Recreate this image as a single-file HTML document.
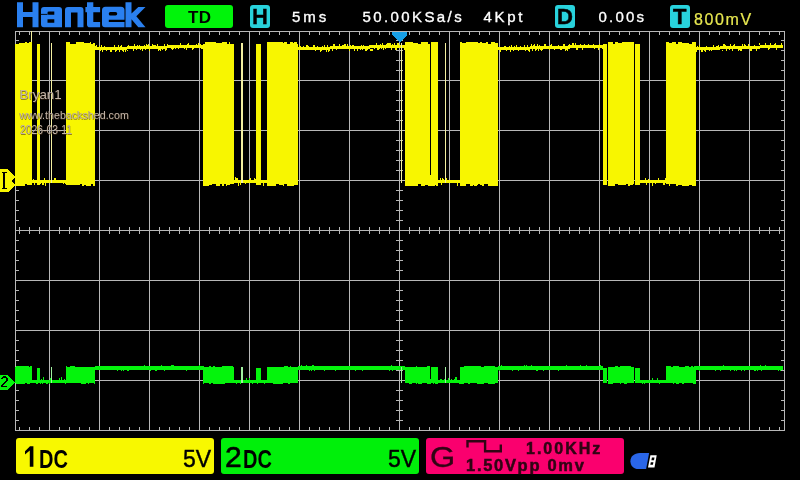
<!DOCTYPE html>
<html><head><meta charset="utf-8">
<style>
html,body{margin:0;padding:0;background:#000;}
#scr{will-change:transform;position:relative;width:800px;height:480px;overflow:hidden;background:#000;font-family:"Liberation Sans",sans-serif;}
.t{position:absolute;white-space:nowrap;line-height:1;}
svg{position:absolute;left:0;top:0;}
.box{position:absolute;border-radius:3px;}
.ov{color:#c4b6aa;text-shadow:0.6px 0.6px 0 rgba(70,45,20,.55),-0.4px -0.4px 0 rgba(70,45,20,.35);}
.tw{font-size:15px;color:#fff;-webkit-text-stroke:0.35px #fff;}
</style></head><body><div id="scr">
<svg width="800" height="480" viewBox="0 0 800 480" shape-rendering="crispEdges">
<rect x="15" y="31" width="770" height="1" fill="#b8b8b8"/>
<rect x="15" y="430" width="770" height="1" fill="#b8b8b8"/>
<rect x="15" y="31" width="1" height="400" fill="#b8b8b8"/>
<rect x="784" y="31" width="1" height="400" fill="#b8b8b8"/>
<rect x="49" y="31" width="1" height="399" fill="#b8b8b8"/>
<rect x="99" y="31" width="1" height="399" fill="#b8b8b8"/>
<rect x="149" y="31" width="1" height="399" fill="#b8b8b8"/>
<rect x="199" y="31" width="1" height="399" fill="#b8b8b8"/>
<rect x="249" y="31" width="1" height="399" fill="#b8b8b8"/>
<rect x="299" y="31" width="1" height="399" fill="#b8b8b8"/>
<rect x="349" y="31" width="1" height="399" fill="#b8b8b8"/>
<rect x="399" y="31" width="1" height="399" fill="#b8b8b8"/>
<rect x="449" y="31" width="1" height="399" fill="#b8b8b8"/>
<rect x="499" y="31" width="1" height="399" fill="#b8b8b8"/>
<rect x="549" y="31" width="1" height="399" fill="#b8b8b8"/>
<rect x="599" y="31" width="1" height="399" fill="#b8b8b8"/>
<rect x="649" y="31" width="1" height="399" fill="#b8b8b8"/>
<rect x="699" y="31" width="1" height="399" fill="#b8b8b8"/>
<rect x="749" y="31" width="1" height="399" fill="#b8b8b8"/>
<rect x="15" y="80" width="769" height="1" fill="#b8b8b8"/>
<rect x="15" y="130" width="769" height="1" fill="#b8b8b8"/>
<rect x="15" y="180" width="769" height="1" fill="#b8b8b8"/>
<rect x="15" y="230" width="769" height="1" fill="#b8b8b8"/>
<rect x="15" y="280" width="769" height="1" fill="#b8b8b8"/>
<rect x="15" y="330" width="769" height="1" fill="#b8b8b8"/>
<rect x="15" y="380" width="769" height="1" fill="#b8b8b8"/>
<rect x="19" y="32" width="1" height="3" fill="#b8b8b8"/>
<rect x="19" y="427" width="1" height="3" fill="#b8b8b8"/>
<rect x="19" y="227" width="1" height="7" fill="#b8b8b8"/>
<rect x="29" y="32" width="1" height="3" fill="#b8b8b8"/>
<rect x="29" y="427" width="1" height="3" fill="#b8b8b8"/>
<rect x="29" y="227" width="1" height="7" fill="#b8b8b8"/>
<rect x="39" y="32" width="1" height="3" fill="#b8b8b8"/>
<rect x="39" y="427" width="1" height="3" fill="#b8b8b8"/>
<rect x="39" y="227" width="1" height="7" fill="#b8b8b8"/>
<rect x="59" y="32" width="1" height="3" fill="#b8b8b8"/>
<rect x="59" y="427" width="1" height="3" fill="#b8b8b8"/>
<rect x="59" y="227" width="1" height="7" fill="#b8b8b8"/>
<rect x="69" y="32" width="1" height="3" fill="#b8b8b8"/>
<rect x="69" y="427" width="1" height="3" fill="#b8b8b8"/>
<rect x="69" y="227" width="1" height="7" fill="#b8b8b8"/>
<rect x="79" y="32" width="1" height="3" fill="#b8b8b8"/>
<rect x="79" y="427" width="1" height="3" fill="#b8b8b8"/>
<rect x="79" y="227" width="1" height="7" fill="#b8b8b8"/>
<rect x="89" y="32" width="1" height="3" fill="#b8b8b8"/>
<rect x="89" y="427" width="1" height="3" fill="#b8b8b8"/>
<rect x="89" y="227" width="1" height="7" fill="#b8b8b8"/>
<rect x="109" y="32" width="1" height="3" fill="#b8b8b8"/>
<rect x="109" y="427" width="1" height="3" fill="#b8b8b8"/>
<rect x="109" y="227" width="1" height="7" fill="#b8b8b8"/>
<rect x="119" y="32" width="1" height="3" fill="#b8b8b8"/>
<rect x="119" y="427" width="1" height="3" fill="#b8b8b8"/>
<rect x="119" y="227" width="1" height="7" fill="#b8b8b8"/>
<rect x="129" y="32" width="1" height="3" fill="#b8b8b8"/>
<rect x="129" y="427" width="1" height="3" fill="#b8b8b8"/>
<rect x="129" y="227" width="1" height="7" fill="#b8b8b8"/>
<rect x="139" y="32" width="1" height="3" fill="#b8b8b8"/>
<rect x="139" y="427" width="1" height="3" fill="#b8b8b8"/>
<rect x="139" y="227" width="1" height="7" fill="#b8b8b8"/>
<rect x="159" y="32" width="1" height="3" fill="#b8b8b8"/>
<rect x="159" y="427" width="1" height="3" fill="#b8b8b8"/>
<rect x="159" y="227" width="1" height="7" fill="#b8b8b8"/>
<rect x="169" y="32" width="1" height="3" fill="#b8b8b8"/>
<rect x="169" y="427" width="1" height="3" fill="#b8b8b8"/>
<rect x="169" y="227" width="1" height="7" fill="#b8b8b8"/>
<rect x="179" y="32" width="1" height="3" fill="#b8b8b8"/>
<rect x="179" y="427" width="1" height="3" fill="#b8b8b8"/>
<rect x="179" y="227" width="1" height="7" fill="#b8b8b8"/>
<rect x="189" y="32" width="1" height="3" fill="#b8b8b8"/>
<rect x="189" y="427" width="1" height="3" fill="#b8b8b8"/>
<rect x="189" y="227" width="1" height="7" fill="#b8b8b8"/>
<rect x="209" y="32" width="1" height="3" fill="#b8b8b8"/>
<rect x="209" y="427" width="1" height="3" fill="#b8b8b8"/>
<rect x="209" y="227" width="1" height="7" fill="#b8b8b8"/>
<rect x="219" y="32" width="1" height="3" fill="#b8b8b8"/>
<rect x="219" y="427" width="1" height="3" fill="#b8b8b8"/>
<rect x="219" y="227" width="1" height="7" fill="#b8b8b8"/>
<rect x="229" y="32" width="1" height="3" fill="#b8b8b8"/>
<rect x="229" y="427" width="1" height="3" fill="#b8b8b8"/>
<rect x="229" y="227" width="1" height="7" fill="#b8b8b8"/>
<rect x="239" y="32" width="1" height="3" fill="#b8b8b8"/>
<rect x="239" y="427" width="1" height="3" fill="#b8b8b8"/>
<rect x="239" y="227" width="1" height="7" fill="#b8b8b8"/>
<rect x="259" y="32" width="1" height="3" fill="#b8b8b8"/>
<rect x="259" y="427" width="1" height="3" fill="#b8b8b8"/>
<rect x="259" y="227" width="1" height="7" fill="#b8b8b8"/>
<rect x="269" y="32" width="1" height="3" fill="#b8b8b8"/>
<rect x="269" y="427" width="1" height="3" fill="#b8b8b8"/>
<rect x="269" y="227" width="1" height="7" fill="#b8b8b8"/>
<rect x="279" y="32" width="1" height="3" fill="#b8b8b8"/>
<rect x="279" y="427" width="1" height="3" fill="#b8b8b8"/>
<rect x="279" y="227" width="1" height="7" fill="#b8b8b8"/>
<rect x="289" y="32" width="1" height="3" fill="#b8b8b8"/>
<rect x="289" y="427" width="1" height="3" fill="#b8b8b8"/>
<rect x="289" y="227" width="1" height="7" fill="#b8b8b8"/>
<rect x="309" y="32" width="1" height="3" fill="#b8b8b8"/>
<rect x="309" y="427" width="1" height="3" fill="#b8b8b8"/>
<rect x="309" y="227" width="1" height="7" fill="#b8b8b8"/>
<rect x="319" y="32" width="1" height="3" fill="#b8b8b8"/>
<rect x="319" y="427" width="1" height="3" fill="#b8b8b8"/>
<rect x="319" y="227" width="1" height="7" fill="#b8b8b8"/>
<rect x="329" y="32" width="1" height="3" fill="#b8b8b8"/>
<rect x="329" y="427" width="1" height="3" fill="#b8b8b8"/>
<rect x="329" y="227" width="1" height="7" fill="#b8b8b8"/>
<rect x="339" y="32" width="1" height="3" fill="#b8b8b8"/>
<rect x="339" y="427" width="1" height="3" fill="#b8b8b8"/>
<rect x="339" y="227" width="1" height="7" fill="#b8b8b8"/>
<rect x="359" y="32" width="1" height="3" fill="#b8b8b8"/>
<rect x="359" y="427" width="1" height="3" fill="#b8b8b8"/>
<rect x="359" y="227" width="1" height="7" fill="#b8b8b8"/>
<rect x="369" y="32" width="1" height="3" fill="#b8b8b8"/>
<rect x="369" y="427" width="1" height="3" fill="#b8b8b8"/>
<rect x="369" y="227" width="1" height="7" fill="#b8b8b8"/>
<rect x="379" y="32" width="1" height="3" fill="#b8b8b8"/>
<rect x="379" y="427" width="1" height="3" fill="#b8b8b8"/>
<rect x="379" y="227" width="1" height="7" fill="#b8b8b8"/>
<rect x="389" y="32" width="1" height="3" fill="#b8b8b8"/>
<rect x="389" y="427" width="1" height="3" fill="#b8b8b8"/>
<rect x="389" y="227" width="1" height="7" fill="#b8b8b8"/>
<rect x="409" y="32" width="1" height="3" fill="#b8b8b8"/>
<rect x="409" y="427" width="1" height="3" fill="#b8b8b8"/>
<rect x="409" y="227" width="1" height="7" fill="#b8b8b8"/>
<rect x="419" y="32" width="1" height="3" fill="#b8b8b8"/>
<rect x="419" y="427" width="1" height="3" fill="#b8b8b8"/>
<rect x="419" y="227" width="1" height="7" fill="#b8b8b8"/>
<rect x="429" y="32" width="1" height="3" fill="#b8b8b8"/>
<rect x="429" y="427" width="1" height="3" fill="#b8b8b8"/>
<rect x="429" y="227" width="1" height="7" fill="#b8b8b8"/>
<rect x="439" y="32" width="1" height="3" fill="#b8b8b8"/>
<rect x="439" y="427" width="1" height="3" fill="#b8b8b8"/>
<rect x="439" y="227" width="1" height="7" fill="#b8b8b8"/>
<rect x="459" y="32" width="1" height="3" fill="#b8b8b8"/>
<rect x="459" y="427" width="1" height="3" fill="#b8b8b8"/>
<rect x="459" y="227" width="1" height="7" fill="#b8b8b8"/>
<rect x="469" y="32" width="1" height="3" fill="#b8b8b8"/>
<rect x="469" y="427" width="1" height="3" fill="#b8b8b8"/>
<rect x="469" y="227" width="1" height="7" fill="#b8b8b8"/>
<rect x="479" y="32" width="1" height="3" fill="#b8b8b8"/>
<rect x="479" y="427" width="1" height="3" fill="#b8b8b8"/>
<rect x="479" y="227" width="1" height="7" fill="#b8b8b8"/>
<rect x="489" y="32" width="1" height="3" fill="#b8b8b8"/>
<rect x="489" y="427" width="1" height="3" fill="#b8b8b8"/>
<rect x="489" y="227" width="1" height="7" fill="#b8b8b8"/>
<rect x="509" y="32" width="1" height="3" fill="#b8b8b8"/>
<rect x="509" y="427" width="1" height="3" fill="#b8b8b8"/>
<rect x="509" y="227" width="1" height="7" fill="#b8b8b8"/>
<rect x="519" y="32" width="1" height="3" fill="#b8b8b8"/>
<rect x="519" y="427" width="1" height="3" fill="#b8b8b8"/>
<rect x="519" y="227" width="1" height="7" fill="#b8b8b8"/>
<rect x="529" y="32" width="1" height="3" fill="#b8b8b8"/>
<rect x="529" y="427" width="1" height="3" fill="#b8b8b8"/>
<rect x="529" y="227" width="1" height="7" fill="#b8b8b8"/>
<rect x="539" y="32" width="1" height="3" fill="#b8b8b8"/>
<rect x="539" y="427" width="1" height="3" fill="#b8b8b8"/>
<rect x="539" y="227" width="1" height="7" fill="#b8b8b8"/>
<rect x="559" y="32" width="1" height="3" fill="#b8b8b8"/>
<rect x="559" y="427" width="1" height="3" fill="#b8b8b8"/>
<rect x="559" y="227" width="1" height="7" fill="#b8b8b8"/>
<rect x="569" y="32" width="1" height="3" fill="#b8b8b8"/>
<rect x="569" y="427" width="1" height="3" fill="#b8b8b8"/>
<rect x="569" y="227" width="1" height="7" fill="#b8b8b8"/>
<rect x="579" y="32" width="1" height="3" fill="#b8b8b8"/>
<rect x="579" y="427" width="1" height="3" fill="#b8b8b8"/>
<rect x="579" y="227" width="1" height="7" fill="#b8b8b8"/>
<rect x="589" y="32" width="1" height="3" fill="#b8b8b8"/>
<rect x="589" y="427" width="1" height="3" fill="#b8b8b8"/>
<rect x="589" y="227" width="1" height="7" fill="#b8b8b8"/>
<rect x="609" y="32" width="1" height="3" fill="#b8b8b8"/>
<rect x="609" y="427" width="1" height="3" fill="#b8b8b8"/>
<rect x="609" y="227" width="1" height="7" fill="#b8b8b8"/>
<rect x="619" y="32" width="1" height="3" fill="#b8b8b8"/>
<rect x="619" y="427" width="1" height="3" fill="#b8b8b8"/>
<rect x="619" y="227" width="1" height="7" fill="#b8b8b8"/>
<rect x="629" y="32" width="1" height="3" fill="#b8b8b8"/>
<rect x="629" y="427" width="1" height="3" fill="#b8b8b8"/>
<rect x="629" y="227" width="1" height="7" fill="#b8b8b8"/>
<rect x="639" y="32" width="1" height="3" fill="#b8b8b8"/>
<rect x="639" y="427" width="1" height="3" fill="#b8b8b8"/>
<rect x="639" y="227" width="1" height="7" fill="#b8b8b8"/>
<rect x="659" y="32" width="1" height="3" fill="#b8b8b8"/>
<rect x="659" y="427" width="1" height="3" fill="#b8b8b8"/>
<rect x="659" y="227" width="1" height="7" fill="#b8b8b8"/>
<rect x="669" y="32" width="1" height="3" fill="#b8b8b8"/>
<rect x="669" y="427" width="1" height="3" fill="#b8b8b8"/>
<rect x="669" y="227" width="1" height="7" fill="#b8b8b8"/>
<rect x="679" y="32" width="1" height="3" fill="#b8b8b8"/>
<rect x="679" y="427" width="1" height="3" fill="#b8b8b8"/>
<rect x="679" y="227" width="1" height="7" fill="#b8b8b8"/>
<rect x="689" y="32" width="1" height="3" fill="#b8b8b8"/>
<rect x="689" y="427" width="1" height="3" fill="#b8b8b8"/>
<rect x="689" y="227" width="1" height="7" fill="#b8b8b8"/>
<rect x="709" y="32" width="1" height="3" fill="#b8b8b8"/>
<rect x="709" y="427" width="1" height="3" fill="#b8b8b8"/>
<rect x="709" y="227" width="1" height="7" fill="#b8b8b8"/>
<rect x="719" y="32" width="1" height="3" fill="#b8b8b8"/>
<rect x="719" y="427" width="1" height="3" fill="#b8b8b8"/>
<rect x="719" y="227" width="1" height="7" fill="#b8b8b8"/>
<rect x="729" y="32" width="1" height="3" fill="#b8b8b8"/>
<rect x="729" y="427" width="1" height="3" fill="#b8b8b8"/>
<rect x="729" y="227" width="1" height="7" fill="#b8b8b8"/>
<rect x="739" y="32" width="1" height="3" fill="#b8b8b8"/>
<rect x="739" y="427" width="1" height="3" fill="#b8b8b8"/>
<rect x="739" y="227" width="1" height="7" fill="#b8b8b8"/>
<rect x="759" y="32" width="1" height="3" fill="#b8b8b8"/>
<rect x="759" y="427" width="1" height="3" fill="#b8b8b8"/>
<rect x="759" y="227" width="1" height="7" fill="#b8b8b8"/>
<rect x="769" y="32" width="1" height="3" fill="#b8b8b8"/>
<rect x="769" y="427" width="1" height="3" fill="#b8b8b8"/>
<rect x="769" y="227" width="1" height="7" fill="#b8b8b8"/>
<rect x="779" y="32" width="1" height="3" fill="#b8b8b8"/>
<rect x="779" y="427" width="1" height="3" fill="#b8b8b8"/>
<rect x="779" y="227" width="1" height="7" fill="#b8b8b8"/>
<rect x="16" y="40" width="3" height="1" fill="#b8b8b8"/>
<rect x="781" y="40" width="3" height="1" fill="#b8b8b8"/>
<rect x="396" y="40" width="7" height="1" fill="#b8b8b8"/>
<rect x="16" y="50" width="3" height="1" fill="#b8b8b8"/>
<rect x="781" y="50" width="3" height="1" fill="#b8b8b8"/>
<rect x="396" y="50" width="7" height="1" fill="#b8b8b8"/>
<rect x="16" y="60" width="3" height="1" fill="#b8b8b8"/>
<rect x="781" y="60" width="3" height="1" fill="#b8b8b8"/>
<rect x="396" y="60" width="7" height="1" fill="#b8b8b8"/>
<rect x="16" y="70" width="3" height="1" fill="#b8b8b8"/>
<rect x="781" y="70" width="3" height="1" fill="#b8b8b8"/>
<rect x="396" y="70" width="7" height="1" fill="#b8b8b8"/>
<rect x="16" y="90" width="3" height="1" fill="#b8b8b8"/>
<rect x="781" y="90" width="3" height="1" fill="#b8b8b8"/>
<rect x="396" y="90" width="7" height="1" fill="#b8b8b8"/>
<rect x="16" y="100" width="3" height="1" fill="#b8b8b8"/>
<rect x="781" y="100" width="3" height="1" fill="#b8b8b8"/>
<rect x="396" y="100" width="7" height="1" fill="#b8b8b8"/>
<rect x="16" y="110" width="3" height="1" fill="#b8b8b8"/>
<rect x="781" y="110" width="3" height="1" fill="#b8b8b8"/>
<rect x="396" y="110" width="7" height="1" fill="#b8b8b8"/>
<rect x="16" y="120" width="3" height="1" fill="#b8b8b8"/>
<rect x="781" y="120" width="3" height="1" fill="#b8b8b8"/>
<rect x="396" y="120" width="7" height="1" fill="#b8b8b8"/>
<rect x="16" y="140" width="3" height="1" fill="#b8b8b8"/>
<rect x="781" y="140" width="3" height="1" fill="#b8b8b8"/>
<rect x="396" y="140" width="7" height="1" fill="#b8b8b8"/>
<rect x="16" y="150" width="3" height="1" fill="#b8b8b8"/>
<rect x="781" y="150" width="3" height="1" fill="#b8b8b8"/>
<rect x="396" y="150" width="7" height="1" fill="#b8b8b8"/>
<rect x="16" y="160" width="3" height="1" fill="#b8b8b8"/>
<rect x="781" y="160" width="3" height="1" fill="#b8b8b8"/>
<rect x="396" y="160" width="7" height="1" fill="#b8b8b8"/>
<rect x="16" y="170" width="3" height="1" fill="#b8b8b8"/>
<rect x="781" y="170" width="3" height="1" fill="#b8b8b8"/>
<rect x="396" y="170" width="7" height="1" fill="#b8b8b8"/>
<rect x="16" y="190" width="3" height="1" fill="#b8b8b8"/>
<rect x="781" y="190" width="3" height="1" fill="#b8b8b8"/>
<rect x="396" y="190" width="7" height="1" fill="#b8b8b8"/>
<rect x="16" y="200" width="3" height="1" fill="#b8b8b8"/>
<rect x="781" y="200" width="3" height="1" fill="#b8b8b8"/>
<rect x="396" y="200" width="7" height="1" fill="#b8b8b8"/>
<rect x="16" y="210" width="3" height="1" fill="#b8b8b8"/>
<rect x="781" y="210" width="3" height="1" fill="#b8b8b8"/>
<rect x="396" y="210" width="7" height="1" fill="#b8b8b8"/>
<rect x="16" y="220" width="3" height="1" fill="#b8b8b8"/>
<rect x="781" y="220" width="3" height="1" fill="#b8b8b8"/>
<rect x="396" y="220" width="7" height="1" fill="#b8b8b8"/>
<rect x="16" y="240" width="3" height="1" fill="#b8b8b8"/>
<rect x="781" y="240" width="3" height="1" fill="#b8b8b8"/>
<rect x="396" y="240" width="7" height="1" fill="#b8b8b8"/>
<rect x="16" y="250" width="3" height="1" fill="#b8b8b8"/>
<rect x="781" y="250" width="3" height="1" fill="#b8b8b8"/>
<rect x="396" y="250" width="7" height="1" fill="#b8b8b8"/>
<rect x="16" y="260" width="3" height="1" fill="#b8b8b8"/>
<rect x="781" y="260" width="3" height="1" fill="#b8b8b8"/>
<rect x="396" y="260" width="7" height="1" fill="#b8b8b8"/>
<rect x="16" y="270" width="3" height="1" fill="#b8b8b8"/>
<rect x="781" y="270" width="3" height="1" fill="#b8b8b8"/>
<rect x="396" y="270" width="7" height="1" fill="#b8b8b8"/>
<rect x="16" y="290" width="3" height="1" fill="#b8b8b8"/>
<rect x="781" y="290" width="3" height="1" fill="#b8b8b8"/>
<rect x="396" y="290" width="7" height="1" fill="#b8b8b8"/>
<rect x="16" y="300" width="3" height="1" fill="#b8b8b8"/>
<rect x="781" y="300" width="3" height="1" fill="#b8b8b8"/>
<rect x="396" y="300" width="7" height="1" fill="#b8b8b8"/>
<rect x="16" y="310" width="3" height="1" fill="#b8b8b8"/>
<rect x="781" y="310" width="3" height="1" fill="#b8b8b8"/>
<rect x="396" y="310" width="7" height="1" fill="#b8b8b8"/>
<rect x="16" y="320" width="3" height="1" fill="#b8b8b8"/>
<rect x="781" y="320" width="3" height="1" fill="#b8b8b8"/>
<rect x="396" y="320" width="7" height="1" fill="#b8b8b8"/>
<rect x="16" y="340" width="3" height="1" fill="#b8b8b8"/>
<rect x="781" y="340" width="3" height="1" fill="#b8b8b8"/>
<rect x="396" y="340" width="7" height="1" fill="#b8b8b8"/>
<rect x="16" y="350" width="3" height="1" fill="#b8b8b8"/>
<rect x="781" y="350" width="3" height="1" fill="#b8b8b8"/>
<rect x="396" y="350" width="7" height="1" fill="#b8b8b8"/>
<rect x="16" y="360" width="3" height="1" fill="#b8b8b8"/>
<rect x="781" y="360" width="3" height="1" fill="#b8b8b8"/>
<rect x="396" y="360" width="7" height="1" fill="#b8b8b8"/>
<rect x="16" y="370" width="3" height="1" fill="#b8b8b8"/>
<rect x="781" y="370" width="3" height="1" fill="#b8b8b8"/>
<rect x="396" y="370" width="7" height="1" fill="#b8b8b8"/>
<rect x="16" y="390" width="3" height="1" fill="#b8b8b8"/>
<rect x="781" y="390" width="3" height="1" fill="#b8b8b8"/>
<rect x="396" y="390" width="7" height="1" fill="#b8b8b8"/>
<rect x="16" y="400" width="3" height="1" fill="#b8b8b8"/>
<rect x="781" y="400" width="3" height="1" fill="#b8b8b8"/>
<rect x="396" y="400" width="7" height="1" fill="#b8b8b8"/>
<rect x="16" y="410" width="3" height="1" fill="#b8b8b8"/>
<rect x="781" y="410" width="3" height="1" fill="#b8b8b8"/>
<rect x="396" y="410" width="7" height="1" fill="#b8b8b8"/>
<rect x="16" y="420" width="3" height="1" fill="#b8b8b8"/>
<rect x="781" y="420" width="3" height="1" fill="#b8b8b8"/>
<rect x="396" y="420" width="7" height="1" fill="#b8b8b8"/>
<rect x="95" y="46.5" width="8" height="3.5" fill="#f8f600"/>
<rect x="103" y="46.5" width="8" height="3.5" fill="#f8f600"/>
<rect x="111" y="46.5" width="8" height="3.5" fill="#f8f600"/>
<rect x="119" y="46.5" width="8" height="3.5" fill="#f8f600"/>
<rect x="127" y="45.5" width="8" height="3.5" fill="#f8f600"/>
<rect x="135" y="45.5" width="8" height="3.5" fill="#f8f600"/>
<rect x="143" y="45.5" width="8" height="3.5" fill="#f8f600"/>
<rect x="151" y="45.5" width="8" height="3.5" fill="#f8f600"/>
<rect x="159" y="45.5" width="8" height="3.5" fill="#f8f600"/>
<rect x="167" y="44.5" width="8" height="3.5" fill="#f8f600"/>
<rect x="175" y="44.5" width="8" height="3.5" fill="#f8f600"/>
<rect x="183" y="44.5" width="8" height="3.5" fill="#f8f600"/>
<rect x="191" y="44.5" width="8" height="3.5" fill="#f8f600"/>
<rect x="199" y="44.5" width="4" height="3.5" fill="#f8f600"/>
<rect x="95" y="45.5" width="1" height="1" fill="#f8f600"/>
<rect x="96" y="44.5" width="1" height="2" fill="#f8f600"/>
<rect x="99" y="45.5" width="1" height="1" fill="#f8f600"/>
<rect x="100" y="50" width="1" height="1" fill="#f8f600"/>
<rect x="101" y="44.5" width="1" height="2" fill="#f8f600"/>
<rect x="102" y="50" width="1" height="2" fill="#f8f600"/>
<rect x="104" y="45.5" width="1" height="1" fill="#f8f600"/>
<rect x="106" y="50" width="1" height="1" fill="#f8f600"/>
<rect x="110" y="50" width="1" height="2" fill="#f8f600"/>
<rect x="111" y="50" width="1" height="2" fill="#f8f600"/>
<rect x="114" y="44.5" width="1" height="2" fill="#f8f600"/>
<rect x="115" y="50" width="1" height="2" fill="#f8f600"/>
<rect x="116" y="50" width="1" height="1" fill="#f8f600"/>
<rect x="118" y="44.5" width="1" height="2" fill="#f8f600"/>
<rect x="119" y="50" width="1" height="2" fill="#f8f600"/>
<rect x="120" y="45.5" width="1" height="1" fill="#f8f600"/>
<rect x="121" y="44.5" width="1" height="2" fill="#f8f600"/>
<rect x="122" y="50" width="1" height="1" fill="#f8f600"/>
<rect x="123" y="50" width="1" height="2" fill="#f8f600"/>
<rect x="125" y="50" width="1" height="2" fill="#f8f600"/>
<rect x="127" y="50" width="1" height="1" fill="#f8f600"/>
<rect x="128" y="44.5" width="1" height="1" fill="#f8f600"/>
<rect x="133" y="49" width="1" height="2" fill="#f8f600"/>
<rect x="134" y="43.5" width="1" height="2" fill="#f8f600"/>
<rect x="136" y="49" width="1" height="1" fill="#f8f600"/>
<rect x="137" y="44.5" width="1" height="1" fill="#f8f600"/>
<rect x="139" y="44.5" width="1" height="1" fill="#f8f600"/>
<rect x="140" y="49" width="1" height="1" fill="#f8f600"/>
<rect x="142" y="49" width="1" height="2" fill="#f8f600"/>
<rect x="144" y="44.5" width="1" height="1" fill="#f8f600"/>
<rect x="145" y="49" width="1" height="1" fill="#f8f600"/>
<rect x="146" y="43.5" width="1" height="2" fill="#f8f600"/>
<rect x="147" y="44.5" width="1" height="1" fill="#f8f600"/>
<rect x="148" y="43.5" width="1" height="2" fill="#f8f600"/>
<rect x="149" y="49" width="1" height="2" fill="#f8f600"/>
<rect x="152" y="43.5" width="1" height="2" fill="#f8f600"/>
<rect x="153" y="44.5" width="1" height="1" fill="#f8f600"/>
<rect x="154" y="44.5" width="1" height="1" fill="#f8f600"/>
<rect x="155" y="44.5" width="1" height="1" fill="#f8f600"/>
<rect x="157" y="43.5" width="1" height="2" fill="#f8f600"/>
<rect x="158" y="49" width="1" height="2" fill="#f8f600"/>
<rect x="159" y="49" width="1" height="1" fill="#f8f600"/>
<rect x="160" y="49" width="1" height="2" fill="#f8f600"/>
<rect x="162" y="49" width="1" height="1" fill="#f8f600"/>
<rect x="164" y="43.5" width="1" height="2" fill="#f8f600"/>
<rect x="165" y="49" width="1" height="2" fill="#f8f600"/>
<rect x="166" y="49" width="1" height="1" fill="#f8f600"/>
<rect x="167" y="43.5" width="1" height="2" fill="#f8f600"/>
<rect x="171" y="48" width="1" height="1" fill="#f8f600"/>
<rect x="172" y="48" width="1" height="2" fill="#f8f600"/>
<rect x="173" y="48" width="1" height="1" fill="#f8f600"/>
<rect x="175" y="48" width="1" height="1" fill="#f8f600"/>
<rect x="178" y="48" width="1" height="1" fill="#f8f600"/>
<rect x="180" y="42.5" width="1" height="2" fill="#f8f600"/>
<rect x="184" y="48" width="1" height="1" fill="#f8f600"/>
<rect x="186" y="48" width="1" height="2" fill="#f8f600"/>
<rect x="187" y="43.5" width="1" height="1" fill="#f8f600"/>
<rect x="188" y="42.5" width="1" height="2" fill="#f8f600"/>
<rect x="192" y="48" width="1" height="2" fill="#f8f600"/>
<rect x="193" y="48" width="1" height="1" fill="#f8f600"/>
<rect x="196" y="43.5" width="1" height="1" fill="#f8f600"/>
<rect x="198" y="42.5" width="1" height="2" fill="#f8f600"/>
<rect x="200" y="43.5" width="1" height="1" fill="#f8f600"/>
<rect x="201" y="48" width="1" height="1" fill="#f8f600"/>
<rect x="202" y="48" width="1" height="1" fill="#f8f600"/>
<rect x="298" y="46.5" width="8" height="3.5" fill="#f8f600"/>
<rect x="306" y="46.5" width="8" height="3.5" fill="#f8f600"/>
<rect x="314" y="46.5" width="8" height="3.5" fill="#f8f600"/>
<rect x="322" y="46.5" width="8" height="3.5" fill="#f8f600"/>
<rect x="330" y="45.5" width="8" height="3.5" fill="#f8f600"/>
<rect x="338" y="45.5" width="8" height="3.5" fill="#f8f600"/>
<rect x="346" y="45.5" width="8" height="3.5" fill="#f8f600"/>
<rect x="354" y="45.5" width="8" height="3.5" fill="#f8f600"/>
<rect x="362" y="45.5" width="8" height="3.5" fill="#f8f600"/>
<rect x="370" y="44.5" width="8" height="3.5" fill="#f8f600"/>
<rect x="378" y="44.5" width="8" height="3.5" fill="#f8f600"/>
<rect x="386" y="44.5" width="8" height="3.5" fill="#f8f600"/>
<rect x="394" y="44.5" width="8" height="3.5" fill="#f8f600"/>
<rect x="402" y="44.5" width="3" height="3.5" fill="#f8f600"/>
<rect x="299" y="44.5" width="1" height="2" fill="#f8f600"/>
<rect x="300" y="45.5" width="1" height="1" fill="#f8f600"/>
<rect x="303" y="45.5" width="1" height="1" fill="#f8f600"/>
<rect x="306" y="44.5" width="1" height="2" fill="#f8f600"/>
<rect x="307" y="44.5" width="1" height="2" fill="#f8f600"/>
<rect x="308" y="45.5" width="1" height="1" fill="#f8f600"/>
<rect x="313" y="44.5" width="1" height="2" fill="#f8f600"/>
<rect x="314" y="44.5" width="1" height="2" fill="#f8f600"/>
<rect x="315" y="50" width="1" height="1" fill="#f8f600"/>
<rect x="317" y="45.5" width="1" height="1" fill="#f8f600"/>
<rect x="320" y="50" width="1" height="2" fill="#f8f600"/>
<rect x="321" y="50" width="1" height="1" fill="#f8f600"/>
<rect x="322" y="45.5" width="1" height="1" fill="#f8f600"/>
<rect x="324" y="44.5" width="1" height="2" fill="#f8f600"/>
<rect x="326" y="50" width="1" height="2" fill="#f8f600"/>
<rect x="327" y="44.5" width="1" height="2" fill="#f8f600"/>
<rect x="328" y="50" width="1" height="2" fill="#f8f600"/>
<rect x="329" y="50" width="1" height="1" fill="#f8f600"/>
<rect x="332" y="49" width="1" height="2" fill="#f8f600"/>
<rect x="333" y="43.5" width="1" height="2" fill="#f8f600"/>
<rect x="334" y="43.5" width="1" height="2" fill="#f8f600"/>
<rect x="336" y="49" width="1" height="1" fill="#f8f600"/>
<rect x="339" y="43.5" width="1" height="2" fill="#f8f600"/>
<rect x="342" y="44.5" width="1" height="1" fill="#f8f600"/>
<rect x="343" y="44.5" width="1" height="1" fill="#f8f600"/>
<rect x="344" y="43.5" width="1" height="2" fill="#f8f600"/>
<rect x="345" y="43.5" width="1" height="2" fill="#f8f600"/>
<rect x="347" y="43.5" width="1" height="2" fill="#f8f600"/>
<rect x="349" y="49" width="1" height="2" fill="#f8f600"/>
<rect x="350" y="44.5" width="1" height="1" fill="#f8f600"/>
<rect x="352" y="44.5" width="1" height="1" fill="#f8f600"/>
<rect x="353" y="44.5" width="1" height="1" fill="#f8f600"/>
<rect x="354" y="49" width="1" height="2" fill="#f8f600"/>
<rect x="357" y="49" width="1" height="2" fill="#f8f600"/>
<rect x="360" y="49" width="1" height="1" fill="#f8f600"/>
<rect x="361" y="44.5" width="1" height="1" fill="#f8f600"/>
<rect x="362" y="49" width="1" height="1" fill="#f8f600"/>
<rect x="363" y="44.5" width="1" height="1" fill="#f8f600"/>
<rect x="365" y="49" width="1" height="2" fill="#f8f600"/>
<rect x="366" y="49" width="1" height="2" fill="#f8f600"/>
<rect x="367" y="49" width="1" height="1" fill="#f8f600"/>
<rect x="369" y="44.5" width="1" height="1" fill="#f8f600"/>
<rect x="370" y="49" width="1" height="2" fill="#f8f600"/>
<rect x="371" y="49" width="1" height="2" fill="#f8f600"/>
<rect x="372" y="49" width="1" height="2" fill="#f8f600"/>
<rect x="374" y="48" width="1" height="1" fill="#f8f600"/>
<rect x="376" y="42.5" width="1" height="2" fill="#f8f600"/>
<rect x="377" y="48" width="1" height="2" fill="#f8f600"/>
<rect x="378" y="48" width="1" height="2" fill="#f8f600"/>
<rect x="379" y="48" width="1" height="1" fill="#f8f600"/>
<rect x="380" y="43.5" width="1" height="1" fill="#f8f600"/>
<rect x="381" y="48" width="1" height="1" fill="#f8f600"/>
<rect x="382" y="42.5" width="1" height="2" fill="#f8f600"/>
<rect x="383" y="48" width="1" height="2" fill="#f8f600"/>
<rect x="385" y="48" width="1" height="1" fill="#f8f600"/>
<rect x="386" y="43.5" width="1" height="1" fill="#f8f600"/>
<rect x="387" y="42.5" width="1" height="2" fill="#f8f600"/>
<rect x="388" y="42.5" width="1" height="2" fill="#f8f600"/>
<rect x="389" y="42.5" width="1" height="2" fill="#f8f600"/>
<rect x="390" y="42.5" width="1" height="2" fill="#f8f600"/>
<rect x="391" y="48" width="1" height="2" fill="#f8f600"/>
<rect x="392" y="43.5" width="1" height="1" fill="#f8f600"/>
<rect x="394" y="42.5" width="1" height="2" fill="#f8f600"/>
<rect x="395" y="48" width="1" height="2" fill="#f8f600"/>
<rect x="396" y="48" width="1" height="2" fill="#f8f600"/>
<rect x="397" y="42.5" width="1" height="2" fill="#f8f600"/>
<rect x="398" y="42.5" width="1" height="2" fill="#f8f600"/>
<rect x="401" y="48" width="1" height="2" fill="#f8f600"/>
<rect x="404" y="48" width="1" height="2" fill="#f8f600"/>
<rect x="498" y="46.5" width="8" height="3.5" fill="#f8f600"/>
<rect x="506" y="46.5" width="8" height="3.5" fill="#f8f600"/>
<rect x="514" y="46.5" width="8" height="3.5" fill="#f8f600"/>
<rect x="522" y="46.5" width="8" height="3.5" fill="#f8f600"/>
<rect x="530" y="45.5" width="8" height="3.5" fill="#f8f600"/>
<rect x="538" y="45.5" width="8" height="3.5" fill="#f8f600"/>
<rect x="546" y="45.5" width="8" height="3.5" fill="#f8f600"/>
<rect x="554" y="45.5" width="8" height="3.5" fill="#f8f600"/>
<rect x="562" y="45.5" width="8" height="3.5" fill="#f8f600"/>
<rect x="570" y="44.5" width="8" height="3.5" fill="#f8f600"/>
<rect x="578" y="44.5" width="8" height="3.5" fill="#f8f600"/>
<rect x="586" y="44.5" width="8" height="3.5" fill="#f8f600"/>
<rect x="594" y="44.5" width="8" height="3.5" fill="#f8f600"/>
<rect x="602" y="44.5" width="1" height="3.5" fill="#f8f600"/>
<rect x="500" y="50" width="1" height="2" fill="#f8f600"/>
<rect x="504" y="45.5" width="1" height="1" fill="#f8f600"/>
<rect x="505" y="45.5" width="1" height="1" fill="#f8f600"/>
<rect x="506" y="50" width="1" height="1" fill="#f8f600"/>
<rect x="509" y="45.5" width="1" height="1" fill="#f8f600"/>
<rect x="510" y="50" width="1" height="2" fill="#f8f600"/>
<rect x="511" y="44.5" width="1" height="2" fill="#f8f600"/>
<rect x="513" y="50" width="1" height="1" fill="#f8f600"/>
<rect x="514" y="45.5" width="1" height="1" fill="#f8f600"/>
<rect x="516" y="44.5" width="1" height="2" fill="#f8f600"/>
<rect x="518" y="50" width="1" height="1" fill="#f8f600"/>
<rect x="520" y="45.5" width="1" height="1" fill="#f8f600"/>
<rect x="524" y="44.5" width="1" height="2" fill="#f8f600"/>
<rect x="525" y="50" width="1" height="1" fill="#f8f600"/>
<rect x="527" y="44.5" width="1" height="2" fill="#f8f600"/>
<rect x="528" y="50" width="1" height="1" fill="#f8f600"/>
<rect x="529" y="50" width="1" height="2" fill="#f8f600"/>
<rect x="531" y="43.5" width="1" height="2" fill="#f8f600"/>
<rect x="532" y="49" width="1" height="2" fill="#f8f600"/>
<rect x="533" y="44.5" width="1" height="1" fill="#f8f600"/>
<rect x="534" y="43.5" width="1" height="2" fill="#f8f600"/>
<rect x="535" y="49" width="1" height="2" fill="#f8f600"/>
<rect x="536" y="49" width="1" height="1" fill="#f8f600"/>
<rect x="537" y="43.5" width="1" height="2" fill="#f8f600"/>
<rect x="538" y="49" width="1" height="2" fill="#f8f600"/>
<rect x="539" y="44.5" width="1" height="1" fill="#f8f600"/>
<rect x="540" y="49" width="1" height="1" fill="#f8f600"/>
<rect x="541" y="49" width="1" height="2" fill="#f8f600"/>
<rect x="542" y="49" width="1" height="1" fill="#f8f600"/>
<rect x="544" y="43.5" width="1" height="2" fill="#f8f600"/>
<rect x="545" y="43.5" width="1" height="2" fill="#f8f600"/>
<rect x="549" y="49" width="1" height="1" fill="#f8f600"/>
<rect x="550" y="44.5" width="1" height="1" fill="#f8f600"/>
<rect x="551" y="43.5" width="1" height="2" fill="#f8f600"/>
<rect x="554" y="49" width="1" height="1" fill="#f8f600"/>
<rect x="558" y="44.5" width="1" height="1" fill="#f8f600"/>
<rect x="560" y="49" width="1" height="1" fill="#f8f600"/>
<rect x="561" y="49" width="1" height="1" fill="#f8f600"/>
<rect x="563" y="43.5" width="1" height="2" fill="#f8f600"/>
<rect x="564" y="43.5" width="1" height="2" fill="#f8f600"/>
<rect x="565" y="49" width="1" height="2" fill="#f8f600"/>
<rect x="566" y="49" width="1" height="1" fill="#f8f600"/>
<rect x="567" y="49" width="1" height="2" fill="#f8f600"/>
<rect x="568" y="44.5" width="1" height="1" fill="#f8f600"/>
<rect x="569" y="43.5" width="1" height="2" fill="#f8f600"/>
<rect x="570" y="44.5" width="1" height="1" fill="#f8f600"/>
<rect x="571" y="44.5" width="1" height="1" fill="#f8f600"/>
<rect x="572" y="42.5" width="1" height="2" fill="#f8f600"/>
<rect x="573" y="42.5" width="1" height="2" fill="#f8f600"/>
<rect x="575" y="42.5" width="1" height="2" fill="#f8f600"/>
<rect x="576" y="48" width="1" height="2" fill="#f8f600"/>
<rect x="577" y="48" width="1" height="2" fill="#f8f600"/>
<rect x="580" y="43.5" width="1" height="1" fill="#f8f600"/>
<rect x="582" y="48" width="1" height="2" fill="#f8f600"/>
<rect x="584" y="43.5" width="1" height="1" fill="#f8f600"/>
<rect x="588" y="43.5" width="1" height="1" fill="#f8f600"/>
<rect x="593" y="43.5" width="1" height="1" fill="#f8f600"/>
<rect x="594" y="48" width="1" height="1" fill="#f8f600"/>
<rect x="598" y="48" width="1" height="2" fill="#f8f600"/>
<rect x="599" y="43.5" width="1" height="1" fill="#f8f600"/>
<rect x="602" y="48" width="1" height="1" fill="#f8f600"/>
<rect x="696" y="46.5" width="8" height="3.5" fill="#f8f600"/>
<rect x="704" y="46.5" width="8" height="3.5" fill="#f8f600"/>
<rect x="712" y="46.5" width="8" height="3.5" fill="#f8f600"/>
<rect x="720" y="45.5" width="8" height="3.5" fill="#f8f600"/>
<rect x="728" y="45.5" width="8" height="3.5" fill="#f8f600"/>
<rect x="736" y="45.5" width="8" height="3.5" fill="#f8f600"/>
<rect x="744" y="45.5" width="8" height="3.5" fill="#f8f600"/>
<rect x="752" y="45.5" width="8" height="3.5" fill="#f8f600"/>
<rect x="760" y="44.5" width="8" height="3.5" fill="#f8f600"/>
<rect x="768" y="44.5" width="8" height="3.5" fill="#f8f600"/>
<rect x="776" y="44.5" width="7" height="3.5" fill="#f8f600"/>
<rect x="696" y="50" width="1" height="2" fill="#f8f600"/>
<rect x="697" y="45.5" width="1" height="1" fill="#f8f600"/>
<rect x="699" y="44.5" width="1" height="2" fill="#f8f600"/>
<rect x="701" y="50" width="1" height="2" fill="#f8f600"/>
<rect x="702" y="50" width="1" height="2" fill="#f8f600"/>
<rect x="704" y="50" width="1" height="1" fill="#f8f600"/>
<rect x="705" y="50" width="1" height="2" fill="#f8f600"/>
<rect x="706" y="45.5" width="1" height="1" fill="#f8f600"/>
<rect x="709" y="50" width="1" height="1" fill="#f8f600"/>
<rect x="711" y="50" width="1" height="1" fill="#f8f600"/>
<rect x="713" y="44.5" width="1" height="2" fill="#f8f600"/>
<rect x="716" y="45.5" width="1" height="1" fill="#f8f600"/>
<rect x="717" y="45.5" width="1" height="1" fill="#f8f600"/>
<rect x="718" y="44.5" width="1" height="2" fill="#f8f600"/>
<rect x="722" y="50" width="1" height="1" fill="#f8f600"/>
<rect x="723" y="43.5" width="1" height="2" fill="#f8f600"/>
<rect x="724" y="43.5" width="1" height="2" fill="#f8f600"/>
<rect x="725" y="44.5" width="1" height="1" fill="#f8f600"/>
<rect x="726" y="49" width="1" height="2" fill="#f8f600"/>
<rect x="729" y="49" width="1" height="1" fill="#f8f600"/>
<rect x="730" y="43.5" width="1" height="2" fill="#f8f600"/>
<rect x="732" y="49" width="1" height="2" fill="#f8f600"/>
<rect x="733" y="44.5" width="1" height="1" fill="#f8f600"/>
<rect x="734" y="43.5" width="1" height="2" fill="#f8f600"/>
<rect x="738" y="49" width="1" height="2" fill="#f8f600"/>
<rect x="739" y="49" width="1" height="1" fill="#f8f600"/>
<rect x="740" y="49" width="1" height="2" fill="#f8f600"/>
<rect x="741" y="49" width="1" height="2" fill="#f8f600"/>
<rect x="742" y="43.5" width="1" height="2" fill="#f8f600"/>
<rect x="744" y="43.5" width="1" height="2" fill="#f8f600"/>
<rect x="745" y="44.5" width="1" height="1" fill="#f8f600"/>
<rect x="748" y="43.5" width="1" height="2" fill="#f8f600"/>
<rect x="750" y="49" width="1" height="2" fill="#f8f600"/>
<rect x="751" y="49" width="1" height="2" fill="#f8f600"/>
<rect x="754" y="44.5" width="1" height="1" fill="#f8f600"/>
<rect x="756" y="49" width="1" height="2" fill="#f8f600"/>
<rect x="759" y="42.5" width="1" height="2" fill="#f8f600"/>
<rect x="765" y="42.5" width="1" height="2" fill="#f8f600"/>
<rect x="768" y="48" width="1" height="2" fill="#f8f600"/>
<rect x="769" y="48" width="1" height="1" fill="#f8f600"/>
<rect x="770" y="42.5" width="1" height="2" fill="#f8f600"/>
<rect x="774" y="43.5" width="1" height="1" fill="#f8f600"/>
<rect x="775" y="42.5" width="1" height="2" fill="#f8f600"/>
<rect x="776" y="48" width="1" height="2" fill="#f8f600"/>
<rect x="781" y="42.5" width="1" height="2" fill="#f8f600"/>
<rect x="31" y="179.5" width="8" height="3.0" fill="#f8f600"/>
<rect x="39" y="179.5" width="8" height="3.0" fill="#f8f600"/>
<rect x="47" y="179.5" width="8" height="3.0" fill="#f8f600"/>
<rect x="55" y="179.5" width="8" height="3.0" fill="#f8f600"/>
<rect x="63" y="179.5" width="3" height="3.0" fill="#f8f600"/>
<rect x="33" y="178.5" width="1" height="1" fill="#f8f600"/>
<rect x="34" y="182.5" width="1" height="2" fill="#f8f600"/>
<rect x="40" y="182.5" width="1" height="1" fill="#f8f600"/>
<rect x="42" y="182.5" width="1" height="2" fill="#f8f600"/>
<rect x="43" y="182.5" width="1" height="2" fill="#f8f600"/>
<rect x="44" y="177.5" width="1" height="2" fill="#f8f600"/>
<rect x="45" y="182.5" width="1" height="3" fill="#f8f600"/>
<rect x="51" y="178.5" width="1" height="1" fill="#f8f600"/>
<rect x="54" y="177.5" width="1" height="2" fill="#f8f600"/>
<rect x="55" y="177.5" width="1" height="2" fill="#f8f600"/>
<rect x="63" y="182.5" width="1" height="1" fill="#f8f600"/>
<rect x="65" y="182.5" width="1" height="1" fill="#f8f600"/>
<rect x="234" y="179.5" width="8" height="3.0" fill="#f8f600"/>
<rect x="242" y="179.5" width="8" height="3.0" fill="#f8f600"/>
<rect x="250" y="179.5" width="8" height="3.0" fill="#f8f600"/>
<rect x="258" y="179.5" width="8" height="3.0" fill="#f8f600"/>
<rect x="266" y="179.5" width="1" height="3.0" fill="#f8f600"/>
<rect x="235" y="176.5" width="1" height="3" fill="#f8f600"/>
<rect x="236" y="177.5" width="1" height="2" fill="#f8f600"/>
<rect x="237" y="177.5" width="1" height="2" fill="#f8f600"/>
<rect x="238" y="182.5" width="1" height="3" fill="#f8f600"/>
<rect x="240" y="182.5" width="1" height="2" fill="#f8f600"/>
<rect x="245" y="182.5" width="1" height="1" fill="#f8f600"/>
<rect x="249" y="178.5" width="1" height="1" fill="#f8f600"/>
<rect x="250" y="177.5" width="1" height="2" fill="#f8f600"/>
<rect x="254" y="177.5" width="1" height="2" fill="#f8f600"/>
<rect x="255" y="178.5" width="1" height="1" fill="#f8f600"/>
<rect x="259" y="182.5" width="1" height="1" fill="#f8f600"/>
<rect x="260" y="177.5" width="1" height="2" fill="#f8f600"/>
<rect x="263" y="182.5" width="1" height="3" fill="#f8f600"/>
<rect x="438" y="179.5" width="8" height="3.0" fill="#f8f600"/>
<rect x="446" y="179.5" width="8" height="3.0" fill="#f8f600"/>
<rect x="454" y="179.5" width="6" height="3.0" fill="#f8f600"/>
<rect x="440" y="177.5" width="1" height="2" fill="#f8f600"/>
<rect x="441" y="182.5" width="1" height="2" fill="#f8f600"/>
<rect x="442" y="177.5" width="1" height="2" fill="#f8f600"/>
<rect x="443" y="178.5" width="1" height="1" fill="#f8f600"/>
<rect x="446" y="177.5" width="1" height="2" fill="#f8f600"/>
<rect x="457" y="182.5" width="1" height="3" fill="#f8f600"/>
<rect x="640" y="179.5" width="8" height="3.0" fill="#f8f600"/>
<rect x="648" y="179.5" width="8" height="3.0" fill="#f8f600"/>
<rect x="656" y="179.5" width="8" height="3.0" fill="#f8f600"/>
<rect x="664" y="179.5" width="2" height="3.0" fill="#f8f600"/>
<rect x="645" y="177.5" width="1" height="2" fill="#f8f600"/>
<rect x="646" y="182.5" width="1" height="2" fill="#f8f600"/>
<rect x="648" y="178.5" width="1" height="1" fill="#f8f600"/>
<rect x="652" y="182.5" width="1" height="3" fill="#f8f600"/>
<rect x="655" y="182.5" width="1" height="1" fill="#f8f600"/>
<rect x="658" y="177.5" width="1" height="2" fill="#f8f600"/>
<rect x="663" y="182.5" width="1" height="2" fill="#f8f600"/>
<rect x="664" y="182.5" width="1" height="2" fill="#f8f600"/>
<rect x="665" y="177.5" width="1" height="2" fill="#f8f600"/>
<rect x="15" y="44" width="17" height="140" fill="#f8f600"/>
<rect x="15" y="44" width="4" height="0.5" fill="#f8f600"/>
<rect x="15" y="183.5" width="4" height="2.5" fill="#f8f600"/>
<rect x="19" y="43" width="4" height="1.5" fill="#f8f600"/>
<rect x="19" y="183.5" width="4" height="2.5" fill="#f8f600"/>
<rect x="23" y="43" width="2" height="1.5" fill="#f8f600"/>
<rect x="23" y="183.5" width="2" height="2.5" fill="#f8f600"/>
<rect x="25" y="42" width="2" height="2.5" fill="#f8f600"/>
<rect x="25" y="183.5" width="2" height="0.5" fill="#f8f600"/>
<rect x="27" y="43" width="2" height="1.5" fill="#f8f600"/>
<rect x="27" y="183.5" width="2" height="1.5" fill="#f8f600"/>
<rect x="29" y="42" width="3" height="2.5" fill="#f8f600"/>
<rect x="29" y="183.5" width="3" height="1.5" fill="#f8f600"/>
<rect x="66" y="44" width="29" height="140" fill="#f8f600"/>
<rect x="66" y="42" width="1" height="2.5" fill="#f8f600"/>
<rect x="66" y="183.5" width="1" height="1.5" fill="#f8f600"/>
<rect x="67" y="42" width="3" height="2.5" fill="#f8f600"/>
<rect x="67" y="183.5" width="3" height="1.5" fill="#f8f600"/>
<rect x="70" y="44" width="4" height="0.5" fill="#f8f600"/>
<rect x="70" y="183.5" width="4" height="1.5" fill="#f8f600"/>
<rect x="74" y="44" width="2" height="0.5" fill="#f8f600"/>
<rect x="74" y="183.5" width="2" height="1.5" fill="#f8f600"/>
<rect x="76" y="42" width="4" height="2.5" fill="#f8f600"/>
<rect x="76" y="183.5" width="4" height="1.5" fill="#f8f600"/>
<rect x="80" y="42" width="2" height="2.5" fill="#f8f600"/>
<rect x="80" y="183.5" width="2" height="0.5" fill="#f8f600"/>
<rect x="82" y="42" width="2" height="2.5" fill="#f8f600"/>
<rect x="82" y="183.5" width="2" height="2.5" fill="#f8f600"/>
<rect x="84" y="43" width="2" height="1.5" fill="#f8f600"/>
<rect x="84" y="183.5" width="2" height="1.5" fill="#f8f600"/>
<rect x="86" y="43" width="4" height="1.5" fill="#f8f600"/>
<rect x="86" y="183.5" width="4" height="2.5" fill="#f8f600"/>
<rect x="90" y="42" width="1" height="2.5" fill="#f8f600"/>
<rect x="90" y="183.5" width="1" height="2.5" fill="#f8f600"/>
<rect x="91" y="44" width="2" height="0.5" fill="#f8f600"/>
<rect x="91" y="183.5" width="2" height="0.5" fill="#f8f600"/>
<rect x="93" y="43" width="2" height="1.5" fill="#f8f600"/>
<rect x="93" y="183.5" width="2" height="2.5" fill="#f8f600"/>
<rect x="203" y="44" width="31" height="140" fill="#f8f600"/>
<rect x="203" y="44" width="2" height="0.5" fill="#f8f600"/>
<rect x="203" y="183.5" width="2" height="2.5" fill="#f8f600"/>
<rect x="205" y="42" width="4" height="2.5" fill="#f8f600"/>
<rect x="205" y="183.5" width="4" height="2.5" fill="#f8f600"/>
<rect x="209" y="42" width="1" height="2.5" fill="#f8f600"/>
<rect x="209" y="183.5" width="1" height="1.5" fill="#f8f600"/>
<rect x="210" y="42" width="2" height="2.5" fill="#f8f600"/>
<rect x="210" y="183.5" width="2" height="1.5" fill="#f8f600"/>
<rect x="212" y="42" width="4" height="2.5" fill="#f8f600"/>
<rect x="212" y="183.5" width="4" height="0.5" fill="#f8f600"/>
<rect x="216" y="43" width="4" height="1.5" fill="#f8f600"/>
<rect x="216" y="183.5" width="4" height="2.5" fill="#f8f600"/>
<rect x="220" y="43" width="2" height="1.5" fill="#f8f600"/>
<rect x="220" y="183.5" width="2" height="0.5" fill="#f8f600"/>
<rect x="222" y="42" width="2" height="2.5" fill="#f8f600"/>
<rect x="222" y="183.5" width="2" height="2.5" fill="#f8f600"/>
<rect x="224" y="42" width="2" height="2.5" fill="#f8f600"/>
<rect x="224" y="183.5" width="2" height="0.5" fill="#f8f600"/>
<rect x="226" y="42" width="1" height="2.5" fill="#f8f600"/>
<rect x="226" y="183.5" width="1" height="2.5" fill="#f8f600"/>
<rect x="227" y="44" width="2" height="0.5" fill="#f8f600"/>
<rect x="227" y="183.5" width="2" height="1.5" fill="#f8f600"/>
<rect x="229" y="42" width="1" height="2.5" fill="#f8f600"/>
<rect x="229" y="183.5" width="1" height="1.5" fill="#f8f600"/>
<rect x="230" y="44" width="4" height="0.5" fill="#f8f600"/>
<rect x="230" y="183.5" width="4" height="0.5" fill="#f8f600"/>
<rect x="267" y="44" width="31" height="140" fill="#f8f600"/>
<rect x="267" y="42" width="2" height="2.5" fill="#f8f600"/>
<rect x="267" y="183.5" width="2" height="2.5" fill="#f8f600"/>
<rect x="269" y="42" width="1" height="2.5" fill="#f8f600"/>
<rect x="269" y="183.5" width="1" height="2.5" fill="#f8f600"/>
<rect x="270" y="42" width="3" height="2.5" fill="#f8f600"/>
<rect x="270" y="183.5" width="3" height="2.5" fill="#f8f600"/>
<rect x="273" y="42" width="2" height="2.5" fill="#f8f600"/>
<rect x="273" y="183.5" width="2" height="2.5" fill="#f8f600"/>
<rect x="275" y="42" width="1" height="2.5" fill="#f8f600"/>
<rect x="275" y="183.5" width="1" height="2.5" fill="#f8f600"/>
<rect x="276" y="42" width="3" height="2.5" fill="#f8f600"/>
<rect x="276" y="183.5" width="3" height="0.5" fill="#f8f600"/>
<rect x="279" y="42" width="4" height="2.5" fill="#f8f600"/>
<rect x="279" y="183.5" width="4" height="1.5" fill="#f8f600"/>
<rect x="283" y="43" width="1" height="1.5" fill="#f8f600"/>
<rect x="283" y="183.5" width="1" height="2.5" fill="#f8f600"/>
<rect x="284" y="42" width="3" height="2.5" fill="#f8f600"/>
<rect x="284" y="183.5" width="3" height="0.5" fill="#f8f600"/>
<rect x="287" y="44" width="3" height="0.5" fill="#f8f600"/>
<rect x="287" y="183.5" width="3" height="2.5" fill="#f8f600"/>
<rect x="290" y="42" width="3" height="2.5" fill="#f8f600"/>
<rect x="290" y="183.5" width="3" height="2.5" fill="#f8f600"/>
<rect x="293" y="43" width="1" height="1.5" fill="#f8f600"/>
<rect x="293" y="183.5" width="1" height="2.5" fill="#f8f600"/>
<rect x="294" y="42" width="1" height="2.5" fill="#f8f600"/>
<rect x="294" y="183.5" width="1" height="1.5" fill="#f8f600"/>
<rect x="295" y="42" width="2" height="2.5" fill="#f8f600"/>
<rect x="295" y="183.5" width="2" height="1.5" fill="#f8f600"/>
<rect x="297" y="44" width="1" height="0.5" fill="#f8f600"/>
<rect x="297" y="183.5" width="1" height="1.5" fill="#f8f600"/>
<rect x="405" y="44" width="33" height="140" fill="#f8f600"/>
<rect x="405" y="42" width="2" height="2.5" fill="#f8f600"/>
<rect x="405" y="183.5" width="2" height="2.5" fill="#f8f600"/>
<rect x="407" y="42" width="4" height="2.5" fill="#f8f600"/>
<rect x="407" y="183.5" width="4" height="2.5" fill="#f8f600"/>
<rect x="411" y="42" width="2" height="2.5" fill="#f8f600"/>
<rect x="411" y="183.5" width="2" height="2.5" fill="#f8f600"/>
<rect x="413" y="43" width="2" height="1.5" fill="#f8f600"/>
<rect x="413" y="183.5" width="2" height="2.5" fill="#f8f600"/>
<rect x="415" y="43" width="3" height="1.5" fill="#f8f600"/>
<rect x="415" y="183.5" width="3" height="2.5" fill="#f8f600"/>
<rect x="418" y="44" width="3" height="0.5" fill="#f8f600"/>
<rect x="418" y="183.5" width="3" height="0.5" fill="#f8f600"/>
<rect x="421" y="42" width="4" height="2.5" fill="#f8f600"/>
<rect x="421" y="183.5" width="4" height="2.5" fill="#f8f600"/>
<rect x="425" y="42" width="3" height="2.5" fill="#f8f600"/>
<rect x="425" y="183.5" width="3" height="1.5" fill="#f8f600"/>
<rect x="428" y="44" width="2" height="0.5" fill="#f8f600"/>
<rect x="428" y="183.5" width="2" height="2.5" fill="#f8f600"/>
<rect x="430" y="42" width="4" height="2.5" fill="#f8f600"/>
<rect x="430" y="183.5" width="4" height="2.5" fill="#f8f600"/>
<rect x="434" y="42" width="1" height="2.5" fill="#f8f600"/>
<rect x="434" y="183.5" width="1" height="2.5" fill="#f8f600"/>
<rect x="435" y="42" width="1" height="2.5" fill="#f8f600"/>
<rect x="435" y="183.5" width="1" height="1.5" fill="#f8f600"/>
<rect x="436" y="42" width="2" height="2.5" fill="#f8f600"/>
<rect x="436" y="183.5" width="2" height="2.5" fill="#f8f600"/>
<rect x="460" y="44" width="38" height="140" fill="#f8f600"/>
<rect x="460" y="42" width="1" height="2.5" fill="#f8f600"/>
<rect x="460" y="183.5" width="1" height="2.5" fill="#f8f600"/>
<rect x="461" y="42" width="1" height="2.5" fill="#f8f600"/>
<rect x="461" y="183.5" width="1" height="2.5" fill="#f8f600"/>
<rect x="462" y="43" width="4" height="1.5" fill="#f8f600"/>
<rect x="462" y="183.5" width="4" height="2.5" fill="#f8f600"/>
<rect x="466" y="42" width="4" height="2.5" fill="#f8f600"/>
<rect x="466" y="183.5" width="4" height="0.5" fill="#f8f600"/>
<rect x="470" y="42" width="1" height="2.5" fill="#f8f600"/>
<rect x="470" y="183.5" width="1" height="2.5" fill="#f8f600"/>
<rect x="471" y="42" width="2" height="2.5" fill="#f8f600"/>
<rect x="471" y="183.5" width="2" height="2.5" fill="#f8f600"/>
<rect x="473" y="42" width="1" height="2.5" fill="#f8f600"/>
<rect x="473" y="183.5" width="1" height="1.5" fill="#f8f600"/>
<rect x="474" y="42" width="3" height="2.5" fill="#f8f600"/>
<rect x="474" y="183.5" width="3" height="2.5" fill="#f8f600"/>
<rect x="477" y="42" width="1" height="2.5" fill="#f8f600"/>
<rect x="477" y="183.5" width="1" height="1.5" fill="#f8f600"/>
<rect x="478" y="43" width="2" height="1.5" fill="#f8f600"/>
<rect x="478" y="183.5" width="2" height="0.5" fill="#f8f600"/>
<rect x="480" y="42" width="2" height="2.5" fill="#f8f600"/>
<rect x="480" y="183.5" width="2" height="1.5" fill="#f8f600"/>
<rect x="482" y="43" width="2" height="1.5" fill="#f8f600"/>
<rect x="482" y="183.5" width="2" height="2.5" fill="#f8f600"/>
<rect x="484" y="43" width="2" height="1.5" fill="#f8f600"/>
<rect x="484" y="183.5" width="2" height="0.5" fill="#f8f600"/>
<rect x="486" y="42" width="2" height="2.5" fill="#f8f600"/>
<rect x="486" y="183.5" width="2" height="0.5" fill="#f8f600"/>
<rect x="488" y="44" width="1" height="0.5" fill="#f8f600"/>
<rect x="488" y="183.5" width="1" height="2.5" fill="#f8f600"/>
<rect x="489" y="44" width="2" height="0.5" fill="#f8f600"/>
<rect x="489" y="183.5" width="2" height="2.5" fill="#f8f600"/>
<rect x="491" y="42" width="4" height="2.5" fill="#f8f600"/>
<rect x="491" y="183.5" width="4" height="2.5" fill="#f8f600"/>
<rect x="495" y="43" width="3" height="1.5" fill="#f8f600"/>
<rect x="495" y="183.5" width="3" height="2.5" fill="#f8f600"/>
<rect x="608" y="44" width="26" height="140" fill="#f8f600"/>
<rect x="608" y="42" width="3" height="2.5" fill="#f8f600"/>
<rect x="608" y="183.5" width="3" height="2.5" fill="#f8f600"/>
<rect x="611" y="42" width="2" height="2.5" fill="#f8f600"/>
<rect x="611" y="183.5" width="2" height="2.5" fill="#f8f600"/>
<rect x="613" y="44" width="2" height="0.5" fill="#f8f600"/>
<rect x="613" y="183.5" width="2" height="2.5" fill="#f8f600"/>
<rect x="615" y="42" width="3" height="2.5" fill="#f8f600"/>
<rect x="615" y="183.5" width="3" height="0.5" fill="#f8f600"/>
<rect x="618" y="43" width="4" height="1.5" fill="#f8f600"/>
<rect x="618" y="183.5" width="4" height="1.5" fill="#f8f600"/>
<rect x="622" y="42" width="4" height="2.5" fill="#f8f600"/>
<rect x="622" y="183.5" width="4" height="1.5" fill="#f8f600"/>
<rect x="626" y="42" width="2" height="2.5" fill="#f8f600"/>
<rect x="626" y="183.5" width="2" height="0.5" fill="#f8f600"/>
<rect x="628" y="42" width="2" height="2.5" fill="#f8f600"/>
<rect x="628" y="183.5" width="2" height="2.5" fill="#f8f600"/>
<rect x="630" y="42" width="3" height="2.5" fill="#f8f600"/>
<rect x="630" y="183.5" width="3" height="1.5" fill="#f8f600"/>
<rect x="633" y="42" width="1" height="2.5" fill="#f8f600"/>
<rect x="633" y="183.5" width="1" height="0.5" fill="#f8f600"/>
<rect x="666" y="44" width="30" height="140" fill="#f8f600"/>
<rect x="666" y="42" width="3" height="2.5" fill="#f8f600"/>
<rect x="666" y="183.5" width="3" height="0.5" fill="#f8f600"/>
<rect x="669" y="43" width="1" height="1.5" fill="#f8f600"/>
<rect x="669" y="183.5" width="1" height="2.5" fill="#f8f600"/>
<rect x="670" y="43" width="2" height="1.5" fill="#f8f600"/>
<rect x="670" y="183.5" width="2" height="0.5" fill="#f8f600"/>
<rect x="672" y="42" width="4" height="2.5" fill="#f8f600"/>
<rect x="672" y="183.5" width="4" height="0.5" fill="#f8f600"/>
<rect x="676" y="44" width="2" height="0.5" fill="#f8f600"/>
<rect x="676" y="183.5" width="2" height="2.5" fill="#f8f600"/>
<rect x="678" y="42" width="4" height="2.5" fill="#f8f600"/>
<rect x="678" y="183.5" width="4" height="1.5" fill="#f8f600"/>
<rect x="682" y="43" width="4" height="1.5" fill="#f8f600"/>
<rect x="682" y="183.5" width="4" height="2.5" fill="#f8f600"/>
<rect x="686" y="43" width="3" height="1.5" fill="#f8f600"/>
<rect x="686" y="183.5" width="3" height="2.5" fill="#f8f600"/>
<rect x="689" y="44" width="3" height="0.5" fill="#f8f600"/>
<rect x="689" y="183.5" width="3" height="1.5" fill="#f8f600"/>
<rect x="692" y="42" width="4" height="2.5" fill="#f8f600"/>
<rect x="692" y="183.5" width="4" height="2.5" fill="#f8f600"/>
<rect x="37" y="44" width="3" height="141" fill="#f8f600"/>
<rect x="256" y="44" width="5" height="141" fill="#f8f600"/>
<rect x="603" y="44" width="4" height="141" fill="#f8f600"/>
<rect x="635" y="44" width="5" height="141" fill="#f8f600"/>
<rect x="51" y="43" width="1" height="139.5" fill="#f4f0a0"/>
<rect x="241" y="43" width="2" height="139.5" fill="#f4f0a0"/>
<rect x="401" y="43" width="1" height="139.5" fill="#f4f0a0"/>
<rect x="445" y="43" width="1" height="139.5" fill="#f4f0a0"/>
<rect x="31" y="31" width="1" height="11" fill="#f4f0a0"/>
<rect x="430" y="42" width="1" height="133" fill="#000"/>
<rect x="634" y="42" width="1" height="134" fill="#000"/>
<rect x="607" y="42" width="1" height="138" fill="#000"/>
<rect x="95" y="366" width="8" height="3.5" fill="#04f40c"/>
<rect x="103" y="366" width="8" height="3.5" fill="#04f40c"/>
<rect x="111" y="366" width="8" height="3.5" fill="#04f40c"/>
<rect x="119" y="366" width="8" height="3.5" fill="#04f40c"/>
<rect x="127" y="366" width="8" height="3.5" fill="#04f40c"/>
<rect x="135" y="366" width="8" height="3.5" fill="#04f40c"/>
<rect x="143" y="366" width="8" height="3.5" fill="#04f40c"/>
<rect x="151" y="366" width="8" height="3.5" fill="#04f40c"/>
<rect x="159" y="366" width="8" height="3.5" fill="#04f40c"/>
<rect x="167" y="366" width="8" height="3.5" fill="#04f40c"/>
<rect x="175" y="366" width="8" height="3.5" fill="#04f40c"/>
<rect x="183" y="366" width="8" height="3.5" fill="#04f40c"/>
<rect x="191" y="366" width="8" height="3.5" fill="#04f40c"/>
<rect x="199" y="366" width="4" height="3.5" fill="#04f40c"/>
<rect x="117" y="369.5" width="1" height="1" fill="#04f40c"/>
<rect x="121" y="369.5" width="1" height="1" fill="#04f40c"/>
<rect x="123" y="369.5" width="1" height="1" fill="#04f40c"/>
<rect x="127" y="369.5" width="1" height="1" fill="#04f40c"/>
<rect x="128" y="369.5" width="1" height="1" fill="#04f40c"/>
<rect x="144" y="365" width="1" height="1" fill="#04f40c"/>
<rect x="150" y="369.5" width="1" height="1" fill="#04f40c"/>
<rect x="155" y="369.5" width="1" height="1" fill="#04f40c"/>
<rect x="156" y="369.5" width="1" height="1" fill="#04f40c"/>
<rect x="161" y="365" width="1" height="1" fill="#04f40c"/>
<rect x="164" y="369.5" width="1" height="1" fill="#04f40c"/>
<rect x="171" y="365" width="1" height="1" fill="#04f40c"/>
<rect x="172" y="365" width="1" height="1" fill="#04f40c"/>
<rect x="173" y="365" width="1" height="1" fill="#04f40c"/>
<rect x="186" y="369.5" width="1" height="1" fill="#04f40c"/>
<rect x="199" y="365" width="1" height="1" fill="#04f40c"/>
<rect x="298" y="366" width="8" height="3.5" fill="#04f40c"/>
<rect x="306" y="366" width="8" height="3.5" fill="#04f40c"/>
<rect x="314" y="366" width="8" height="3.5" fill="#04f40c"/>
<rect x="322" y="366" width="8" height="3.5" fill="#04f40c"/>
<rect x="330" y="366" width="8" height="3.5" fill="#04f40c"/>
<rect x="338" y="366" width="8" height="3.5" fill="#04f40c"/>
<rect x="346" y="366" width="8" height="3.5" fill="#04f40c"/>
<rect x="354" y="366" width="8" height="3.5" fill="#04f40c"/>
<rect x="362" y="366" width="8" height="3.5" fill="#04f40c"/>
<rect x="370" y="366" width="8" height="3.5" fill="#04f40c"/>
<rect x="378" y="366" width="8" height="3.5" fill="#04f40c"/>
<rect x="386" y="366" width="8" height="3.5" fill="#04f40c"/>
<rect x="394" y="366" width="8" height="3.5" fill="#04f40c"/>
<rect x="402" y="366" width="3" height="3.5" fill="#04f40c"/>
<rect x="301" y="365" width="1" height="1" fill="#04f40c"/>
<rect x="306" y="365" width="1" height="1" fill="#04f40c"/>
<rect x="309" y="369.5" width="1" height="1" fill="#04f40c"/>
<rect x="311" y="369.5" width="1" height="1" fill="#04f40c"/>
<rect x="312" y="365" width="1" height="1" fill="#04f40c"/>
<rect x="313" y="365" width="1" height="1" fill="#04f40c"/>
<rect x="314" y="369.5" width="1" height="1" fill="#04f40c"/>
<rect x="324" y="369.5" width="1" height="1" fill="#04f40c"/>
<rect x="335" y="369.5" width="1" height="1" fill="#04f40c"/>
<rect x="355" y="369.5" width="1" height="1" fill="#04f40c"/>
<rect x="362" y="369.5" width="1" height="1" fill="#04f40c"/>
<rect x="389" y="369.5" width="1" height="1" fill="#04f40c"/>
<rect x="391" y="365" width="1" height="1" fill="#04f40c"/>
<rect x="392" y="369.5" width="1" height="1" fill="#04f40c"/>
<rect x="498" y="366" width="8" height="3.5" fill="#04f40c"/>
<rect x="506" y="366" width="8" height="3.5" fill="#04f40c"/>
<rect x="514" y="366" width="8" height="3.5" fill="#04f40c"/>
<rect x="522" y="366" width="8" height="3.5" fill="#04f40c"/>
<rect x="530" y="366" width="8" height="3.5" fill="#04f40c"/>
<rect x="538" y="366" width="8" height="3.5" fill="#04f40c"/>
<rect x="546" y="366" width="8" height="3.5" fill="#04f40c"/>
<rect x="554" y="366" width="8" height="3.5" fill="#04f40c"/>
<rect x="562" y="366" width="8" height="3.5" fill="#04f40c"/>
<rect x="570" y="366" width="8" height="3.5" fill="#04f40c"/>
<rect x="578" y="366" width="8" height="3.5" fill="#04f40c"/>
<rect x="586" y="366" width="8" height="3.5" fill="#04f40c"/>
<rect x="594" y="366" width="8" height="3.5" fill="#04f40c"/>
<rect x="602" y="366" width="1" height="3.5" fill="#04f40c"/>
<rect x="499" y="369.5" width="1" height="1" fill="#04f40c"/>
<rect x="501" y="365" width="1" height="1" fill="#04f40c"/>
<rect x="512" y="369.5" width="1" height="1" fill="#04f40c"/>
<rect x="518" y="369.5" width="1" height="1" fill="#04f40c"/>
<rect x="524" y="365" width="1" height="1" fill="#04f40c"/>
<rect x="526" y="365" width="1" height="1" fill="#04f40c"/>
<rect x="531" y="365" width="1" height="1" fill="#04f40c"/>
<rect x="536" y="369.5" width="1" height="1" fill="#04f40c"/>
<rect x="537" y="369.5" width="1" height="1" fill="#04f40c"/>
<rect x="543" y="369.5" width="1" height="1" fill="#04f40c"/>
<rect x="558" y="369.5" width="1" height="1" fill="#04f40c"/>
<rect x="566" y="365" width="1" height="1" fill="#04f40c"/>
<rect x="580" y="365" width="1" height="1" fill="#04f40c"/>
<rect x="586" y="365" width="1" height="1" fill="#04f40c"/>
<rect x="600" y="365" width="1" height="1" fill="#04f40c"/>
<rect x="696" y="366" width="8" height="3.5" fill="#04f40c"/>
<rect x="704" y="366" width="8" height="3.5" fill="#04f40c"/>
<rect x="712" y="366" width="8" height="3.5" fill="#04f40c"/>
<rect x="720" y="366" width="8" height="3.5" fill="#04f40c"/>
<rect x="728" y="366" width="8" height="3.5" fill="#04f40c"/>
<rect x="736" y="366" width="8" height="3.5" fill="#04f40c"/>
<rect x="744" y="366" width="8" height="3.5" fill="#04f40c"/>
<rect x="752" y="366" width="8" height="3.5" fill="#04f40c"/>
<rect x="760" y="366" width="8" height="3.5" fill="#04f40c"/>
<rect x="768" y="366" width="8" height="3.5" fill="#04f40c"/>
<rect x="776" y="366" width="7" height="3.5" fill="#04f40c"/>
<rect x="699" y="369.5" width="1" height="1" fill="#04f40c"/>
<rect x="715" y="369.5" width="1" height="1" fill="#04f40c"/>
<rect x="720" y="369.5" width="1" height="1" fill="#04f40c"/>
<rect x="723" y="365" width="1" height="1" fill="#04f40c"/>
<rect x="730" y="369.5" width="1" height="1" fill="#04f40c"/>
<rect x="734" y="369.5" width="1" height="1" fill="#04f40c"/>
<rect x="736" y="369.5" width="1" height="1" fill="#04f40c"/>
<rect x="741" y="369.5" width="1" height="1" fill="#04f40c"/>
<rect x="744" y="369.5" width="1" height="1" fill="#04f40c"/>
<rect x="754" y="369.5" width="1" height="1" fill="#04f40c"/>
<rect x="755" y="369.5" width="1" height="1" fill="#04f40c"/>
<rect x="757" y="369.5" width="1" height="1" fill="#04f40c"/>
<rect x="760" y="365" width="1" height="1" fill="#04f40c"/>
<rect x="761" y="369.5" width="1" height="1" fill="#04f40c"/>
<rect x="765" y="365" width="1" height="1" fill="#04f40c"/>
<rect x="778" y="369.5" width="1" height="1" fill="#04f40c"/>
<rect x="780" y="369.5" width="1" height="1" fill="#04f40c"/>
<rect x="31" y="379.5" width="8" height="3.5" fill="#04f40c"/>
<rect x="39" y="379.5" width="8" height="3.5" fill="#04f40c"/>
<rect x="47" y="379.5" width="8" height="3.5" fill="#04f40c"/>
<rect x="55" y="379.5" width="8" height="3.5" fill="#04f40c"/>
<rect x="63" y="379.5" width="3" height="3.5" fill="#04f40c"/>
<rect x="31" y="378.5" width="1" height="1" fill="#04f40c"/>
<rect x="36" y="383" width="1" height="1" fill="#04f40c"/>
<rect x="37" y="383" width="1" height="1" fill="#04f40c"/>
<rect x="38" y="378.5" width="1" height="1" fill="#04f40c"/>
<rect x="40" y="383" width="1" height="1" fill="#04f40c"/>
<rect x="41" y="378.5" width="1" height="1" fill="#04f40c"/>
<rect x="42" y="383" width="1" height="1" fill="#04f40c"/>
<rect x="43" y="376.5" width="1" height="3" fill="#04f40c"/>
<rect x="46" y="383" width="1" height="1" fill="#04f40c"/>
<rect x="47" y="383" width="1" height="1" fill="#04f40c"/>
<rect x="49" y="383" width="1" height="1" fill="#04f40c"/>
<rect x="50" y="377.5" width="1" height="2" fill="#04f40c"/>
<rect x="51" y="377.5" width="1" height="2" fill="#04f40c"/>
<rect x="59" y="377.5" width="1" height="2" fill="#04f40c"/>
<rect x="61" y="376.5" width="1" height="3" fill="#04f40c"/>
<rect x="64" y="378.5" width="1" height="1" fill="#04f40c"/>
<rect x="65" y="383" width="1" height="1" fill="#04f40c"/>
<rect x="234" y="379.5" width="8" height="3.5" fill="#04f40c"/>
<rect x="242" y="379.5" width="8" height="3.5" fill="#04f40c"/>
<rect x="250" y="379.5" width="8" height="3.5" fill="#04f40c"/>
<rect x="258" y="379.5" width="8" height="3.5" fill="#04f40c"/>
<rect x="266" y="379.5" width="1" height="3.5" fill="#04f40c"/>
<rect x="236" y="383" width="1" height="1" fill="#04f40c"/>
<rect x="240" y="383" width="1" height="1" fill="#04f40c"/>
<rect x="246" y="377.5" width="1" height="2" fill="#04f40c"/>
<rect x="249" y="377.5" width="1" height="2" fill="#04f40c"/>
<rect x="252" y="383" width="1" height="1" fill="#04f40c"/>
<rect x="257" y="383" width="1" height="1" fill="#04f40c"/>
<rect x="264" y="383" width="1" height="1" fill="#04f40c"/>
<rect x="438" y="379.5" width="8" height="3.5" fill="#04f40c"/>
<rect x="446" y="379.5" width="8" height="3.5" fill="#04f40c"/>
<rect x="454" y="379.5" width="6" height="3.5" fill="#04f40c"/>
<rect x="440" y="378.5" width="1" height="1" fill="#04f40c"/>
<rect x="441" y="378.5" width="1" height="1" fill="#04f40c"/>
<rect x="444" y="378.5" width="1" height="1" fill="#04f40c"/>
<rect x="448" y="377.5" width="1" height="2" fill="#04f40c"/>
<rect x="451" y="378.5" width="1" height="1" fill="#04f40c"/>
<rect x="454" y="378.5" width="1" height="1" fill="#04f40c"/>
<rect x="455" y="376.5" width="1" height="3" fill="#04f40c"/>
<rect x="456" y="376.5" width="1" height="3" fill="#04f40c"/>
<rect x="459" y="383" width="1" height="1" fill="#04f40c"/>
<rect x="640" y="379.5" width="8" height="3.5" fill="#04f40c"/>
<rect x="648" y="379.5" width="8" height="3.5" fill="#04f40c"/>
<rect x="656" y="379.5" width="8" height="3.5" fill="#04f40c"/>
<rect x="664" y="379.5" width="2" height="3.5" fill="#04f40c"/>
<rect x="642" y="383" width="1" height="1" fill="#04f40c"/>
<rect x="644" y="383" width="1" height="1" fill="#04f40c"/>
<rect x="652" y="377.5" width="1" height="2" fill="#04f40c"/>
<rect x="657" y="377.5" width="1" height="2" fill="#04f40c"/>
<rect x="659" y="383" width="1" height="1" fill="#04f40c"/>
<rect x="15" y="367" width="17" height="16" fill="#04f40c"/>
<rect x="15" y="367" width="1" height="0.5" fill="#04f40c"/>
<rect x="15" y="382.5" width="1" height="0.5" fill="#04f40c"/>
<rect x="16" y="366" width="4" height="1.5" fill="#04f40c"/>
<rect x="16" y="382.5" width="4" height="1.5" fill="#04f40c"/>
<rect x="20" y="366" width="2" height="1.5" fill="#04f40c"/>
<rect x="20" y="382.5" width="2" height="1.5" fill="#04f40c"/>
<rect x="22" y="366" width="3" height="1.5" fill="#04f40c"/>
<rect x="22" y="382.5" width="3" height="1.5" fill="#04f40c"/>
<rect x="25" y="366" width="2" height="1.5" fill="#04f40c"/>
<rect x="25" y="382.5" width="2" height="0.5" fill="#04f40c"/>
<rect x="27" y="366" width="2" height="1.5" fill="#04f40c"/>
<rect x="27" y="382.5" width="2" height="1.5" fill="#04f40c"/>
<rect x="29" y="367" width="1" height="0.5" fill="#04f40c"/>
<rect x="29" y="382.5" width="1" height="1.5" fill="#04f40c"/>
<rect x="30" y="366" width="2" height="1.5" fill="#04f40c"/>
<rect x="30" y="382.5" width="2" height="-0.5" fill="#04f40c"/>
<rect x="66" y="367" width="29" height="16" fill="#04f40c"/>
<rect x="66" y="366" width="1" height="1.5" fill="#04f40c"/>
<rect x="66" y="382.5" width="1" height="0.5" fill="#04f40c"/>
<rect x="67" y="367" width="3" height="0.5" fill="#04f40c"/>
<rect x="67" y="382.5" width="3" height="0.5" fill="#04f40c"/>
<rect x="70" y="366" width="2" height="1.5" fill="#04f40c"/>
<rect x="70" y="382.5" width="2" height="0.5" fill="#04f40c"/>
<rect x="72" y="366" width="3" height="1.5" fill="#04f40c"/>
<rect x="72" y="382.5" width="3" height="-0.5" fill="#04f40c"/>
<rect x="75" y="367" width="2" height="0.5" fill="#04f40c"/>
<rect x="75" y="382.5" width="2" height="-0.5" fill="#04f40c"/>
<rect x="77" y="367" width="4" height="0.5" fill="#04f40c"/>
<rect x="77" y="382.5" width="4" height="-0.5" fill="#04f40c"/>
<rect x="81" y="367" width="3" height="0.5" fill="#04f40c"/>
<rect x="81" y="382.5" width="3" height="1.5" fill="#04f40c"/>
<rect x="84" y="367" width="2" height="0.5" fill="#04f40c"/>
<rect x="84" y="382.5" width="2" height="1.5" fill="#04f40c"/>
<rect x="86" y="368" width="2" height="-0.5" fill="#04f40c"/>
<rect x="86" y="382.5" width="2" height="-0.5" fill="#04f40c"/>
<rect x="88" y="367" width="1" height="0.5" fill="#04f40c"/>
<rect x="88" y="382.5" width="1" height="1.5" fill="#04f40c"/>
<rect x="89" y="367" width="2" height="0.5" fill="#04f40c"/>
<rect x="89" y="382.5" width="2" height="0.5" fill="#04f40c"/>
<rect x="91" y="367" width="3" height="0.5" fill="#04f40c"/>
<rect x="91" y="382.5" width="3" height="0.5" fill="#04f40c"/>
<rect x="94" y="367" width="1" height="0.5" fill="#04f40c"/>
<rect x="94" y="382.5" width="1" height="1.5" fill="#04f40c"/>
<rect x="203" y="367" width="31" height="16" fill="#04f40c"/>
<rect x="203" y="366" width="1" height="1.5" fill="#04f40c"/>
<rect x="203" y="382.5" width="1" height="1.5" fill="#04f40c"/>
<rect x="204" y="367" width="4" height="0.5" fill="#04f40c"/>
<rect x="204" y="382.5" width="4" height="-0.5" fill="#04f40c"/>
<rect x="208" y="368" width="1" height="-0.5" fill="#04f40c"/>
<rect x="208" y="382.5" width="1" height="-0.5" fill="#04f40c"/>
<rect x="209" y="366" width="2" height="1.5" fill="#04f40c"/>
<rect x="209" y="382.5" width="2" height="1.5" fill="#04f40c"/>
<rect x="211" y="368" width="2" height="-0.5" fill="#04f40c"/>
<rect x="211" y="382.5" width="2" height="0.5" fill="#04f40c"/>
<rect x="213" y="366" width="2" height="1.5" fill="#04f40c"/>
<rect x="213" y="382.5" width="2" height="1.5" fill="#04f40c"/>
<rect x="215" y="367" width="4" height="0.5" fill="#04f40c"/>
<rect x="215" y="382.5" width="4" height="1.5" fill="#04f40c"/>
<rect x="219" y="367" width="3" height="0.5" fill="#04f40c"/>
<rect x="219" y="382.5" width="3" height="1.5" fill="#04f40c"/>
<rect x="222" y="366" width="3" height="1.5" fill="#04f40c"/>
<rect x="222" y="382.5" width="3" height="1.5" fill="#04f40c"/>
<rect x="225" y="366" width="3" height="1.5" fill="#04f40c"/>
<rect x="225" y="382.5" width="3" height="-0.5" fill="#04f40c"/>
<rect x="228" y="366" width="3" height="1.5" fill="#04f40c"/>
<rect x="228" y="382.5" width="3" height="-0.5" fill="#04f40c"/>
<rect x="231" y="366" width="2" height="1.5" fill="#04f40c"/>
<rect x="231" y="382.5" width="2" height="-0.5" fill="#04f40c"/>
<rect x="233" y="368" width="1" height="-0.5" fill="#04f40c"/>
<rect x="233" y="382.5" width="1" height="0.5" fill="#04f40c"/>
<rect x="267" y="367" width="31" height="16" fill="#04f40c"/>
<rect x="267" y="367" width="2" height="0.5" fill="#04f40c"/>
<rect x="267" y="382.5" width="2" height="0.5" fill="#04f40c"/>
<rect x="269" y="368" width="3" height="-0.5" fill="#04f40c"/>
<rect x="269" y="382.5" width="3" height="0.5" fill="#04f40c"/>
<rect x="272" y="368" width="1" height="-0.5" fill="#04f40c"/>
<rect x="272" y="382.5" width="1" height="-0.5" fill="#04f40c"/>
<rect x="273" y="367" width="3" height="0.5" fill="#04f40c"/>
<rect x="273" y="382.5" width="3" height="1.5" fill="#04f40c"/>
<rect x="276" y="367" width="4" height="0.5" fill="#04f40c"/>
<rect x="276" y="382.5" width="4" height="1.5" fill="#04f40c"/>
<rect x="280" y="368" width="3" height="-0.5" fill="#04f40c"/>
<rect x="280" y="382.5" width="3" height="1.5" fill="#04f40c"/>
<rect x="283" y="367" width="1" height="0.5" fill="#04f40c"/>
<rect x="283" y="382.5" width="1" height="0.5" fill="#04f40c"/>
<rect x="284" y="366" width="4" height="1.5" fill="#04f40c"/>
<rect x="284" y="382.5" width="4" height="0.5" fill="#04f40c"/>
<rect x="288" y="368" width="2" height="-0.5" fill="#04f40c"/>
<rect x="288" y="382.5" width="2" height="1.5" fill="#04f40c"/>
<rect x="290" y="366" width="1" height="1.5" fill="#04f40c"/>
<rect x="290" y="382.5" width="1" height="0.5" fill="#04f40c"/>
<rect x="291" y="368" width="4" height="-0.5" fill="#04f40c"/>
<rect x="291" y="382.5" width="4" height="0.5" fill="#04f40c"/>
<rect x="295" y="367" width="3" height="0.5" fill="#04f40c"/>
<rect x="295" y="382.5" width="3" height="-0.5" fill="#04f40c"/>
<rect x="405" y="367" width="33" height="16" fill="#04f40c"/>
<rect x="405" y="368" width="4" height="-0.5" fill="#04f40c"/>
<rect x="405" y="382.5" width="4" height="-0.5" fill="#04f40c"/>
<rect x="409" y="367" width="3" height="0.5" fill="#04f40c"/>
<rect x="409" y="382.5" width="3" height="1.5" fill="#04f40c"/>
<rect x="412" y="367" width="4" height="0.5" fill="#04f40c"/>
<rect x="412" y="382.5" width="4" height="-0.5" fill="#04f40c"/>
<rect x="416" y="366" width="1" height="1.5" fill="#04f40c"/>
<rect x="416" y="382.5" width="1" height="1.5" fill="#04f40c"/>
<rect x="417" y="368" width="1" height="-0.5" fill="#04f40c"/>
<rect x="417" y="382.5" width="1" height="0.5" fill="#04f40c"/>
<rect x="418" y="368" width="4" height="-0.5" fill="#04f40c"/>
<rect x="418" y="382.5" width="4" height="1.5" fill="#04f40c"/>
<rect x="422" y="368" width="2" height="-0.5" fill="#04f40c"/>
<rect x="422" y="382.5" width="2" height="-0.5" fill="#04f40c"/>
<rect x="424" y="368" width="3" height="-0.5" fill="#04f40c"/>
<rect x="424" y="382.5" width="3" height="0.5" fill="#04f40c"/>
<rect x="427" y="366" width="4" height="1.5" fill="#04f40c"/>
<rect x="427" y="382.5" width="4" height="1.5" fill="#04f40c"/>
<rect x="431" y="367" width="2" height="0.5" fill="#04f40c"/>
<rect x="431" y="382.5" width="2" height="0.5" fill="#04f40c"/>
<rect x="433" y="367" width="1" height="0.5" fill="#04f40c"/>
<rect x="433" y="382.5" width="1" height="1.5" fill="#04f40c"/>
<rect x="434" y="367" width="1" height="0.5" fill="#04f40c"/>
<rect x="434" y="382.5" width="1" height="0.5" fill="#04f40c"/>
<rect x="435" y="368" width="3" height="-0.5" fill="#04f40c"/>
<rect x="435" y="382.5" width="3" height="1.5" fill="#04f40c"/>
<rect x="460" y="367" width="38" height="16" fill="#04f40c"/>
<rect x="460" y="367" width="4" height="0.5" fill="#04f40c"/>
<rect x="460" y="382.5" width="4" height="1.5" fill="#04f40c"/>
<rect x="464" y="366" width="4" height="1.5" fill="#04f40c"/>
<rect x="464" y="382.5" width="4" height="-0.5" fill="#04f40c"/>
<rect x="468" y="366" width="2" height="1.5" fill="#04f40c"/>
<rect x="468" y="382.5" width="2" height="1.5" fill="#04f40c"/>
<rect x="470" y="366" width="2" height="1.5" fill="#04f40c"/>
<rect x="470" y="382.5" width="2" height="-0.5" fill="#04f40c"/>
<rect x="472" y="366" width="1" height="1.5" fill="#04f40c"/>
<rect x="472" y="382.5" width="1" height="0.5" fill="#04f40c"/>
<rect x="473" y="366" width="4" height="1.5" fill="#04f40c"/>
<rect x="473" y="382.5" width="4" height="0.5" fill="#04f40c"/>
<rect x="477" y="366" width="3" height="1.5" fill="#04f40c"/>
<rect x="477" y="382.5" width="3" height="1.5" fill="#04f40c"/>
<rect x="480" y="366" width="1" height="1.5" fill="#04f40c"/>
<rect x="480" y="382.5" width="1" height="1.5" fill="#04f40c"/>
<rect x="481" y="367" width="3" height="0.5" fill="#04f40c"/>
<rect x="481" y="382.5" width="3" height="1.5" fill="#04f40c"/>
<rect x="484" y="366" width="4" height="1.5" fill="#04f40c"/>
<rect x="484" y="382.5" width="4" height="-0.5" fill="#04f40c"/>
<rect x="488" y="366" width="4" height="1.5" fill="#04f40c"/>
<rect x="488" y="382.5" width="4" height="1.5" fill="#04f40c"/>
<rect x="492" y="366" width="2" height="1.5" fill="#04f40c"/>
<rect x="492" y="382.5" width="2" height="1.5" fill="#04f40c"/>
<rect x="494" y="366" width="1" height="1.5" fill="#04f40c"/>
<rect x="494" y="382.5" width="1" height="1.5" fill="#04f40c"/>
<rect x="495" y="368" width="3" height="-0.5" fill="#04f40c"/>
<rect x="495" y="382.5" width="3" height="-0.5" fill="#04f40c"/>
<rect x="608" y="367" width="26" height="16" fill="#04f40c"/>
<rect x="608" y="368" width="4" height="-0.5" fill="#04f40c"/>
<rect x="608" y="382.5" width="4" height="1.5" fill="#04f40c"/>
<rect x="612" y="367" width="1" height="0.5" fill="#04f40c"/>
<rect x="612" y="382.5" width="1" height="1.5" fill="#04f40c"/>
<rect x="613" y="367" width="2" height="0.5" fill="#04f40c"/>
<rect x="613" y="382.5" width="2" height="0.5" fill="#04f40c"/>
<rect x="615" y="366" width="2" height="1.5" fill="#04f40c"/>
<rect x="615" y="382.5" width="2" height="0.5" fill="#04f40c"/>
<rect x="617" y="366" width="1" height="1.5" fill="#04f40c"/>
<rect x="617" y="382.5" width="1" height="0.5" fill="#04f40c"/>
<rect x="618" y="368" width="2" height="-0.5" fill="#04f40c"/>
<rect x="618" y="382.5" width="2" height="-0.5" fill="#04f40c"/>
<rect x="620" y="366" width="1" height="1.5" fill="#04f40c"/>
<rect x="620" y="382.5" width="1" height="1.5" fill="#04f40c"/>
<rect x="621" y="366" width="3" height="1.5" fill="#04f40c"/>
<rect x="621" y="382.5" width="3" height="-0.5" fill="#04f40c"/>
<rect x="624" y="366" width="1" height="1.5" fill="#04f40c"/>
<rect x="624" y="382.5" width="1" height="1.5" fill="#04f40c"/>
<rect x="625" y="366" width="2" height="1.5" fill="#04f40c"/>
<rect x="625" y="382.5" width="2" height="1.5" fill="#04f40c"/>
<rect x="627" y="366" width="4" height="1.5" fill="#04f40c"/>
<rect x="627" y="382.5" width="4" height="0.5" fill="#04f40c"/>
<rect x="631" y="368" width="1" height="-0.5" fill="#04f40c"/>
<rect x="631" y="382.5" width="1" height="0.5" fill="#04f40c"/>
<rect x="632" y="367" width="2" height="0.5" fill="#04f40c"/>
<rect x="632" y="382.5" width="2" height="-0.5" fill="#04f40c"/>
<rect x="666" y="367" width="30" height="16" fill="#04f40c"/>
<rect x="666" y="366" width="1" height="1.5" fill="#04f40c"/>
<rect x="666" y="382.5" width="1" height="-0.5" fill="#04f40c"/>
<rect x="667" y="366" width="4" height="1.5" fill="#04f40c"/>
<rect x="667" y="382.5" width="4" height="-0.5" fill="#04f40c"/>
<rect x="671" y="368" width="2" height="-0.5" fill="#04f40c"/>
<rect x="671" y="382.5" width="2" height="-0.5" fill="#04f40c"/>
<rect x="673" y="366" width="1" height="1.5" fill="#04f40c"/>
<rect x="673" y="382.5" width="1" height="1.5" fill="#04f40c"/>
<rect x="674" y="366" width="2" height="1.5" fill="#04f40c"/>
<rect x="674" y="382.5" width="2" height="0.5" fill="#04f40c"/>
<rect x="676" y="366" width="3" height="1.5" fill="#04f40c"/>
<rect x="676" y="382.5" width="3" height="1.5" fill="#04f40c"/>
<rect x="679" y="368" width="2" height="-0.5" fill="#04f40c"/>
<rect x="679" y="382.5" width="2" height="0.5" fill="#04f40c"/>
<rect x="681" y="367" width="1" height="0.5" fill="#04f40c"/>
<rect x="681" y="382.5" width="1" height="-0.5" fill="#04f40c"/>
<rect x="682" y="368" width="2" height="-0.5" fill="#04f40c"/>
<rect x="682" y="382.5" width="2" height="1.5" fill="#04f40c"/>
<rect x="684" y="368" width="1" height="-0.5" fill="#04f40c"/>
<rect x="684" y="382.5" width="1" height="0.5" fill="#04f40c"/>
<rect x="685" y="366" width="4" height="1.5" fill="#04f40c"/>
<rect x="685" y="382.5" width="4" height="-0.5" fill="#04f40c"/>
<rect x="689" y="368" width="2" height="-0.5" fill="#04f40c"/>
<rect x="689" y="382.5" width="2" height="0.5" fill="#04f40c"/>
<rect x="691" y="366" width="2" height="1.5" fill="#04f40c"/>
<rect x="691" y="382.5" width="2" height="-0.5" fill="#04f40c"/>
<rect x="693" y="367" width="1" height="0.5" fill="#04f40c"/>
<rect x="693" y="382.5" width="1" height="1.5" fill="#04f40c"/>
<rect x="694" y="366" width="2" height="1.5" fill="#04f40c"/>
<rect x="694" y="382.5" width="2" height="1.5" fill="#04f40c"/>
<rect x="37" y="368" width="3" height="15" fill="#04f40c"/>
<rect x="256" y="368" width="5" height="15" fill="#04f40c"/>
<rect x="603" y="368" width="4" height="15" fill="#04f40c"/>
<rect x="635" y="368" width="5" height="15" fill="#04f40c"/>
<rect x="51" y="367" width="1" height="16" fill="#a0f0a0"/>
<rect x="241" y="367" width="2" height="16" fill="#a0f0a0"/>
<rect x="401" y="367" width="1" height="16" fill="#a0f0a0"/>
<rect x="445" y="367" width="1" height="16" fill="#a0f0a0"/>
<rect x="430" y="366" width="1" height="13" fill="#000"/>
<rect x="634" y="366" width="1" height="13" fill="#000"/>
<rect x="607" y="366" width="1" height="13" fill="#000"/>
<polygon points="0,169 8,169 15,177 11,181 15,185 8,192 0,192" fill="#f8f600"/>
<path d="M1.5,172.5h5M4,172.5v15.5M1.5,188.5h5" stroke="#000" stroke-width="1.3" fill="none"/>
<polygon points="0,375 8,375 15,382.5 8,390 0,390" fill="#04f40c"/>
<path d="M1.8,379.3c0.4,-1.6 1.6,-2.3 2.8,-2.3c1.5,0 2.6,1 2.6,2.4c0,1.2 -0.7,2 -2,3.1l-3.4,3.2v0.6h5.6" fill="none" stroke="#000" stroke-width="1.5"/>
<polygon points="392,32 407,32 407,35 400,42 399,42 392,35" fill="#18a0e6"/>
</svg>
<div class="t ov" style="left:19.5px;top:87.5px;font-size:13.3px;">Bryan1</div>
<div class="t ov" style="left:19.5px;top:110px;font-size:10.7px;">www.thebackshed.com</div>
<div class="t ov" style="left:19.5px;top:124px;font-size:12px;transform:scaleX(0.86);transform-origin:0 0;">2026-03-11</div>

<!-- top bar -->
<svg width="160" height="32" viewBox="0 0 160 32" style="left:0;top:0">
<g fill="#2a80f0">
<path d="M17,2.3h6v9.6h9.5v-9.6h6v24.9h-6v-10.2h-9.5v10.2h-6z"/>
<path fill-rule="evenodd" d="M44,7h15a3,3 0 0 1 3,3v17.2h-18a3,3 0 0 1 -3,-3v-14.2a3,3 0 0 1 3,-3zM48.8,11.6h5.5v3.2h-5.5a1.3,1.3 0 0 1 -1.3,-1.3v-0.6a1.3,1.3 0 0 1 1.3,-1.3zM47.5,19.2h6.8v3.5h-6.8z"/>
<path d="M41,13.9h6.5v0.9h-6.5z" fill="#000"/>
<path d="M65,10a3,3 0 0 1 3,-3h12.5a3,3 0 0 1 3,3v17.2h-6v-14.6h-6.5v14.6h-6z"/>
<path d="M87,2.3h6.3v4.7h6.8v5.3h-6.8v9.6h6.8v5.3h-10.3a2.8,2.8 0 0 1 -2.8,-2.8v-12.1h-1.6v-5.3h1.6z"/>
<path fill-rule="evenodd" d="M105.5,6.8h15.5a3.5,3.5 0 0 1 3.5,3.5v9.4h-15.7v2.4h15.7v5.1h-19.5a3,3 0 0 1 -3,-3v-13.9a3.5,3.5 0 0 1 3.5,-3.5zM110.3,12.1h5.2a1.75,1.75 0 0 1 0,3.5h-5.2a1.5,1.5 0 0 1 -1.5,-1.5v-0.5a1.5,1.5 0 0 1 1.5,-1.5z"/>
<path d="M125.5,2.3h6v11.2l6.8,-6.5h7.2l-9.2,9.2l9.2,11h-7.2l-6.8,-8v8h-6z"/>
</g>
</svg>
<div class="box" style="left:165px;top:5px;width:68px;height:23px;background:#00f40a;"></div>
<div class="t" style="left:188px;top:9px;font-size:17px;font-weight:bold;color:#000;letter-spacing:0.3px;">TD</div>
<div class="box" style="left:250px;top:5px;width:20px;height:23px;background:#28d2dc;"></div>
<div class="t" style="left:252px;top:6px;font-size:22px;font-weight:bold;color:#000;-webkit-text-stroke:0.3px #000;">H</div>
<div class="t tw" style="left:292px;top:9px;letter-spacing:3px;">5ms</div>
<div class="t tw" style="left:362.5px;top:9px;letter-spacing:2.4px;">50.00KSa/s</div>
<div class="t tw" style="left:483.5px;top:9px;letter-spacing:2.7px;">4Kpt</div>
<div class="box" style="left:555px;top:5px;width:20px;height:23px;background:#28d2dc;"></div>
<div class="t" style="left:557px;top:6px;font-size:22px;font-weight:bold;color:#000;-webkit-text-stroke:0.5px #000;">D</div>
<div class="t tw" style="left:598.5px;top:9px;letter-spacing:2.2px;">0.00s</div>
<div class="box" style="left:670px;top:5px;width:20px;height:23px;background:#28d2dc;"></div>
<div class="t" style="left:673px;top:6px;font-size:22px;font-weight:bold;color:#000;-webkit-text-stroke:0.5px #000;">T</div>
<div class="t tw" style="left:694px;top:12px;font-size:16px;letter-spacing:1.6px;color:#e8e850;-webkit-text-stroke:0.2px #e8e850;">800mV</div>

<!-- bottom bar -->
<div class="box" style="left:16px;top:438px;width:198px;height:36px;background:#f8f800;"></div>
<div class="box" style="left:221px;top:438px;width:198px;height:36px;background:#00f00a;"></div>
<div class="box" style="left:426px;top:438px;width:198px;height:36px;background:#fa006e;"></div>
<svg width="800" height="480" viewBox="0 0 800 480" style="left:0;top:0">
<path d="M30,446.2 H33.4 V466.8 H29.8 V450.6 L25,454.6 V451.3z" fill="#000"/>
<path d="M467.5,447.6 V441.2 H485.1 V451.3 H500.8 V444.4" fill="none" stroke="#300414" stroke-width="2.4" stroke-linejoin="miter"/>
<path d="M640,452.9 H649.1 L646.1,469.1 H638.5 C633.5,469.1 630.4,465.5 630.4,461.2 C630.4,456.5 634,452.9 640,452.9z" fill="#2a66e8"/>
<path fill-rule="evenodd" d="M650.4,455.3 H656.7 L654.5,467.5 H648z M651.9,457.5 L651.4,460.2 H654 L654.5,457.5z M650.8,462.3 L650.3,464.8 H652.9 L653.4,462.3z" fill="#fff"/>
</svg>
<div class="t" style="left:39px;top:446.5px;font-size:25px;font-weight:bold;color:#000;transform:scaleX(0.8);transform-origin:0 0;">DC</div>
<div class="t" style="left:183px;top:448px;font-size:23px;color:#000;-webkit-text-stroke:0.4px #000;">5V</div>
<div class="t" style="left:225px;top:442px;font-size:30px;color:#000;-webkit-text-stroke:0.6px #000;">2</div>
<div class="t" style="left:243px;top:446.5px;font-size:25px;font-weight:bold;color:#000;transform:scaleX(0.8);transform-origin:0 0;">DC</div>
<div class="t" style="left:388px;top:448px;font-size:23px;color:#000;-webkit-text-stroke:0.4px #000;">5V</div>
<div class="t" style="left:430px;top:442px;font-size:30px;color:#300414;-webkit-text-stroke:0.35px #300414;transform:scaleX(1.08);transform-origin:0 0;">G</div>
<div class="t" style="left:526px;top:441px;font-size:16px;font-weight:bold;color:#300414;letter-spacing:2px;-webkit-text-stroke:0.5px #300414;">1.00KHz</div>
<div class="t" style="left:466px;top:456.5px;font-size:16.5px;font-weight:bold;color:#300414;letter-spacing:1.7px;-webkit-text-stroke:0.5px #300414;">1.50Vpp 0mv</div>
</div></body></html>
